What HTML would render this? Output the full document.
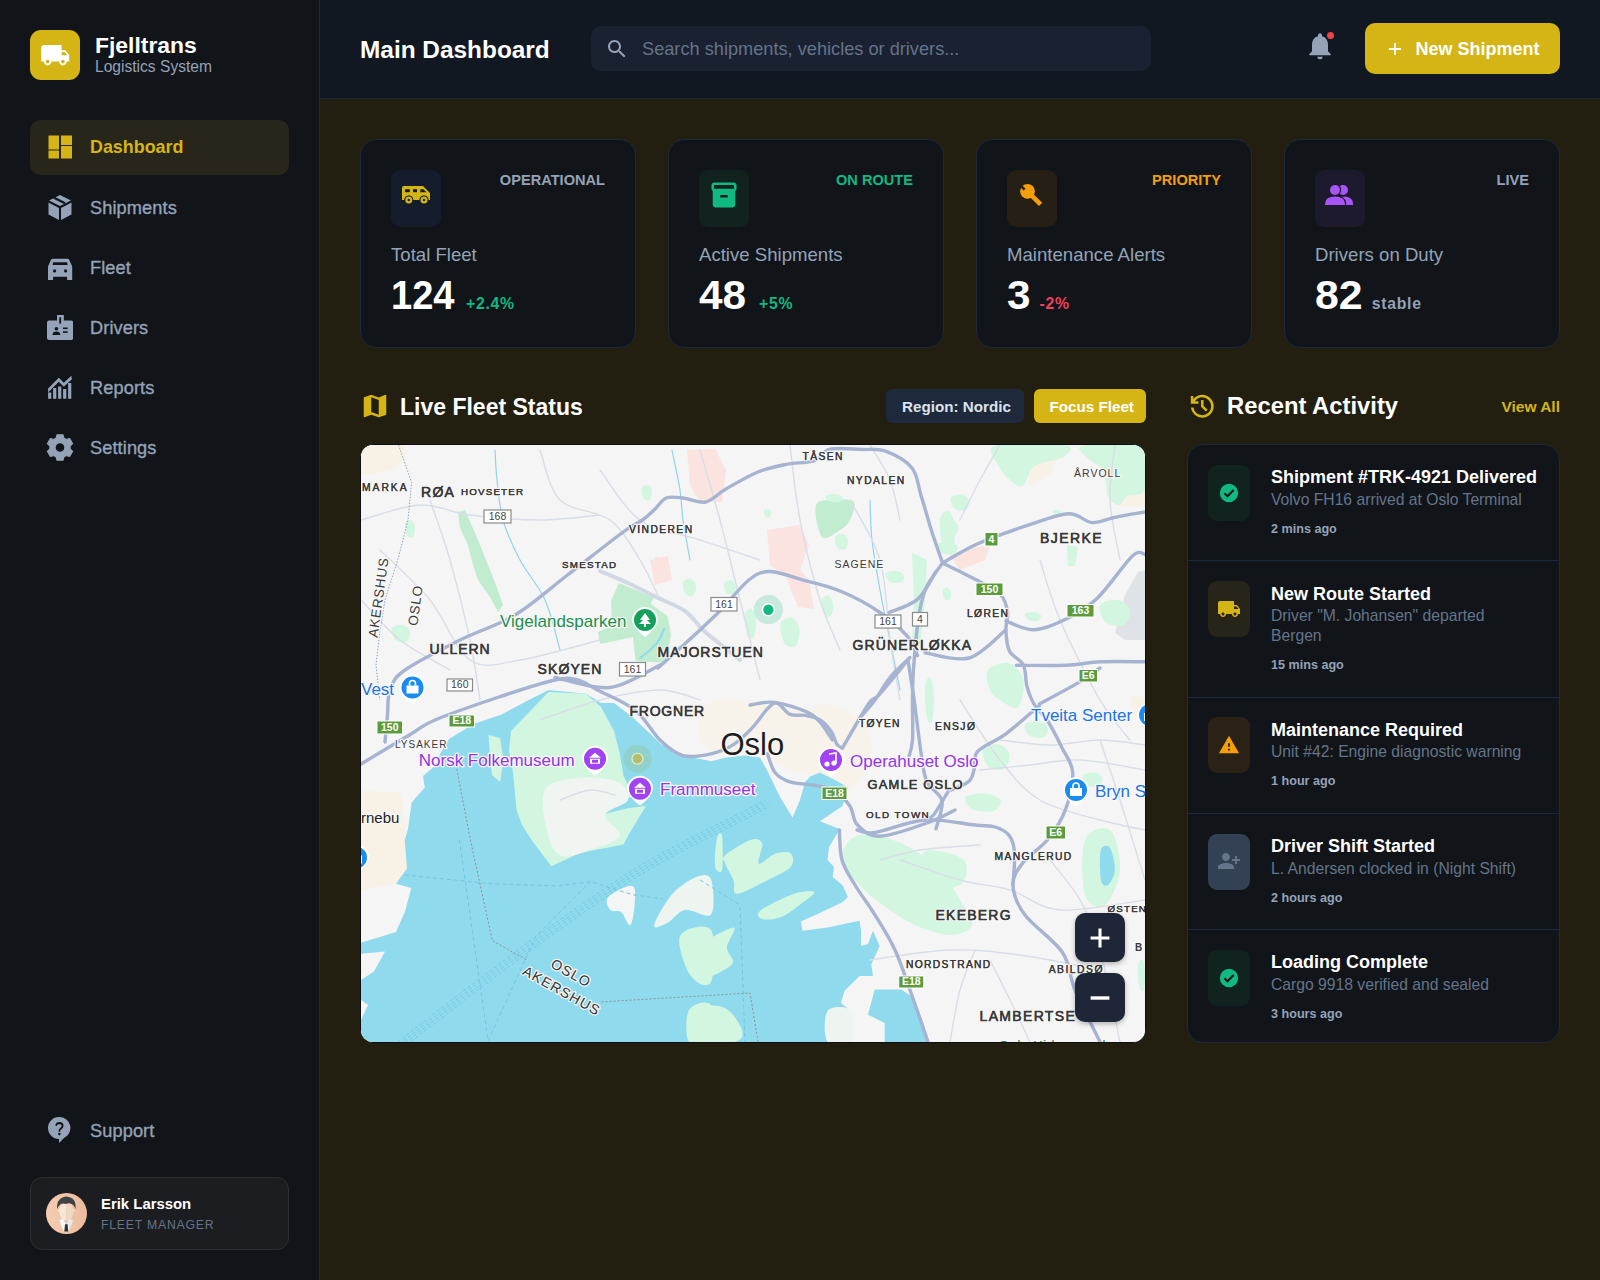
<!DOCTYPE html>
<html><head><meta charset="utf-8"><title>Fjelltrans Dashboard</title>
<style>
html,body{margin:0;padding:0;width:1600px;height:1280px;overflow:hidden;background:#221f12}
body{position:relative;font-family:"Liberation Sans",sans-serif}
.t{position:absolute;line-height:1;white-space:nowrap}
.r{position:absolute;display:block}
</style></head><body>
<div class="r" style="left:0px;top:0px;width:1600px;height:1280px;background:#221f11;border-radius:0px;"></div>
<div class="r" style="left:0px;top:0px;width:320px;height:1280px;background:#111418;border-radius:0px;"></div>
<div class="r" style="left:319px;top:0px;width:1px;height:1280px;background:#1e293b;border-radius:0px;"></div>
<div class="r" style="left:320px;top:0px;width:1280px;height:98px;background:#111822;border-radius:0px;"></div>
<div class="r" style="left:320px;top:98px;width:1280px;height:1px;background:#1e293b;border-radius:0px;"></div>
<div class="r" style="left:30px;top:30px;width:50px;height:50px;background:#d5b515;border-radius:11px;"></div>
<svg class="r" style="left:39.7px;top:39.5px;" width="30.5" height="30.5" viewBox="0 0 24 24"><path fill="#fff" d="M20 8h-3V4H3c-1.1 0-2 .9-2 2v11h2c0 1.66 1.34 3 3 3s3-1.34 3-3h6c0 1.66 1.34 3 3 3s3-1.34 3-3h2v-5l-3-4zM6 18.5c-.83 0-1.5-.67-1.5-1.5s.67-1.5 1.5-1.5 1.5.67 1.5 1.5-.67 1.5-1.5 1.5zm13.5-9l1.96 2.5H17V9.5h2.5zm-1.5 9c-.83 0-1.5-.67-1.5-1.5s.67-1.5 1.5-1.5 1.5.67 1.5 1.5-.67 1.5-1.5 1.5z"/></svg>
<div class="t" style="left:95px;top:33.62px;font-size:22.9px;color:#fff;font-weight:700;letter-spacing:0px;">Fjelltrans</div>
<div class="t" style="left:95px;top:58.79px;font-size:15.6px;color:#94a3b8;font-weight:400;letter-spacing:0px;">Logistics System</div>
<div class="r" style="left:30px;top:120px;width:259px;height:55px;background:#28251a;border-radius:10px;"></div>
<div class="t" style="left:90px;top:139.45px;font-size:17.9px;color:#d5b515;font-weight:700;letter-spacing:0px;">Dashboard</div>
<div class="t" style="left:90px;top:199.19px;font-size:18.2px;color:#94a3b8;font-weight:400;letter-spacing:0.1px;-webkit-text-stroke:0.35px #94a3b8;">Shipments</div>
<div class="t" style="left:90px;top:259.19px;font-size:18.2px;color:#94a3b8;font-weight:400;letter-spacing:0.1px;-webkit-text-stroke:0.35px #94a3b8;">Fleet</div>
<div class="t" style="left:90px;top:319.19px;font-size:18.2px;color:#94a3b8;font-weight:400;letter-spacing:0.1px;-webkit-text-stroke:0.35px #94a3b8;">Drivers</div>
<div class="t" style="left:90px;top:379.19px;font-size:18.2px;color:#94a3b8;font-weight:400;letter-spacing:0.1px;-webkit-text-stroke:0.35px #94a3b8;">Reports</div>
<div class="t" style="left:90px;top:439.19px;font-size:18.2px;color:#94a3b8;font-weight:400;letter-spacing:0.1px;-webkit-text-stroke:0.35px #94a3b8;">Settings</div>
<svg class="r" style="left:48px;top:135px" width="24" height="24" viewBox="0 0 24 24"><g fill="#d5b515"><rect x="0.5" y="0.5" width="10.5" height="14"/><rect x="0.5" y="15.5" width="10.5" height="8"/><rect x="13" y="0.5" width="11" height="9.5"/><rect x="13" y="11" width="11" height="12.5"/></g></svg>
<svg class="r" style="left:46px;top:193px;" width="28" height="28" viewBox="0 0 28 28"><g fill="#94a3b8"><path d="M14 2 L25 7.5 L14 13 L3 7.5 Z"/><path d="M2.5 9.5 L13 15 V27 L2.5 21.5 Z"/><path d="M25.5 9.5 L15 15 V27 L25.5 21.5 Z"/></g><path d="M8 4.8 L19 10.2" stroke="#111418" stroke-width="2.2"/></svg>
<svg class="r" style="left:48px;top:257.5px;" width="25" height="23" viewBox="0 0 25 23"><path fill="#94a3b8" d="M4.6 0.8 H19.6 Q20.8 0.8 21.3 2 L24.2 8.6 V21.9 H19.1 V18.75 H5.1 V21.9 H0 V8.6 L2.9 2 Q3.4 0.8 4.6 0.8 Z"/><path d="M5.1 4.3 H19.1 L19.6 7 H4.6 Z" fill="#111418"/><circle cx="6.6" cy="12.9" r="1.6" fill="#111418"/><circle cx="17.6" cy="12.9" r="1.6" fill="#111418"/></svg>
<svg class="r" style="left:46.9px;top:315px;" width="26.2" height="25" viewBox="46.9 315 26.2 25"><path fill="#94a3b8" d="M56.9 315 H63.75 V320.6 H71 Q73.1 320.6 73.1 322.7 V338 Q73.1 340 71 340 H49 Q46.9 340 46.9 338 V322.7 Q46.9 320.6 49 320.6 H56.9 Z"/><rect x="59.2" y="317.3" width="1.8" height="6.3" fill="#111418"/><circle cx="56.3" cy="328.8" r="1.8" fill="#111418"/><path d="M52.4 335 Q52.6 331.6 56.3 331.6 Q60 331.6 60.2 335 Z" fill="#111418"/><rect x="62.9" y="327.5" width="4.7" height="1.6" fill="#111418"/><rect x="62.9" y="331.3" width="4.7" height="1.6" fill="#111418"/></svg>
<svg class="r" style="left:47px;top:375px;" width="26" height="25" viewBox="47 375 26 25"><g fill="#94a3b8"><path d="M48.1 388.5 L58.8 377.7 L63.8 382.7 L71.3 375.8 L71.9 379.3 L63.8 386.8 L58.8 381.8 L48.1 392.5 Z"/><rect x="48.1" y="392.5" width="3.2" height="6.3" /><rect x="53.1" y="388" width="3.2" height="10.8"/><rect x="58.1" y="386.5" width="3.2" height="12.3"/><rect x="63.1" y="389" width="3.2" height="9.8"/><rect x="68.1" y="383" width="3.2" height="15.8"/></g></svg>
<svg class="r" style="left:44px;top:431px;" width="32" height="33" viewBox="44 431 32 33"><path fill="#94a3b8" stroke="#94a3b8" stroke-width="1.2" stroke-linejoin="round" d="M56.18 438.04 L57.05 434.74 L62.95 434.74 L63.82 438.04 L66.28 439.46 L69.58 438.57 L72.53 443.67 L70.10 446.08 L70.10 448.92 L72.53 451.33 L69.58 456.43 L66.28 455.54 L63.82 456.96 L62.95 460.26 L57.05 460.26 L56.18 456.96 L53.72 455.54 L50.42 456.43 L47.47 451.33 L49.90 448.92 L49.90 446.08 L47.47 443.67 L50.42 438.57 L53.72 439.46 Z"/><circle cx="60" cy="447.5" r="4.3" fill="#111418"/></svg>
<svg class="r" style="left:47px;top:1116px;" width="24" height="28" viewBox="0 0 24 28"><path fill="#94a3b8" d="M12 1 A11 11 0 1 0 12 23 L12 27 L17 22 A11 11 0 0 0 12 1 Z"/><path d="M9.3 9.2 Q9.7 7 12.4 7 Q15.6 7.1 15.6 9.7 Q15.6 11.3 13.9 12.4 Q12.4 13.3 12.4 14.9" stroke="#111418" stroke-width="1.8" fill="none" stroke-linecap="round"/><circle cx="12.4" cy="18.1" r="1.25" fill="#111418"/></svg>
<div class="t" style="left:90px;top:1122.19px;font-size:18.2px;color:#94a3b8;font-weight:400;letter-spacing:0.1px;-webkit-text-stroke:0.35px #94a3b8;">Support</div>
<div class="r" style="left:30px;top:1177px;width:259px;height:73px;background:#1c1d21;border-radius:12px;border:1px solid #2c2e33;box-sizing:border-box;"></div>
<svg class="r" style="left:46px;top:1193px;" width="41" height="41" viewBox="0 0 41 41"><defs><linearGradient id="avg" x1="0" x2="1"><stop offset="0" stop-color="#f4cdb2"/><stop offset="1" stop-color="#ebbc9c"/></linearGradient></defs><circle cx="20.5" cy="20.5" r="20.5" fill="url(#avg)"/><path d="M16.5 24 H23.5 V31 H16.5 Z" fill="#e9c2a5"/><path d="M13.2 27.2 L17.2 25.6 L20.2 31.5 L17.6 38.5 Z" fill="#f4f6f8"/><path d="M27 27.2 L23 25.6 L20.2 31.5 L22.8 38.5 Z" fill="#e6eaee"/><path d="M19 31.2 H21.6 L22.2 38.6 H18.4 Z" fill="#2f3337"/><circle cx="13.4" cy="17.2" r="1.7" fill="#f3e1d0"/><circle cx="27.4" cy="17.2" r="1.7" fill="#ead2bb"/><path d="M20.3 10.5 Q13.3 10.6 13.3 18.5 Q13.6 27 20.3 27.2 Z" fill="#f6e6d7"/><path d="M20.3 10.5 Q27.2 10.6 27.2 18.5 Q27 27 20.3 27.2 Z" fill="#eed8c2"/><path d="M11.2 16.3 Q9.8 5 20.4 3.5 Q31 4.5 29.4 16.3 Q28.2 11.5 24.5 10.6 Q22 10 20 10.9 Q16.5 9.9 14.2 11.4 Q12.2 13 11.2 16.3 Z" fill="#3f4245"/></svg>
<div class="t" style="left:101px;top:1197.39px;font-size:14.9px;color:#fff;font-weight:700;letter-spacing:0px;">Erik Larsson</div>
<div class="t" style="left:101px;top:1218.59px;font-size:12.3px;color:#64748b;font-weight:400;letter-spacing:0.75px;">FLEET MANAGER</div>
<div class="t" style="left:360px;top:37.75px;font-size:24.4px;color:#fff;font-weight:700;letter-spacing:0px;">Main Dashboard</div>
<div class="r" style="left:591px;top:26px;width:560px;height:45px;background:#1a2130;border-radius:10px;"></div>
<svg class="r" style="left:605px;top:37px;" width="24" height="24" viewBox="0 0 24 24"><path fill="#94a3b8" d="M15.5 14h-.79l-.28-.27C15.41 12.59 16 11.11 16 9.5 16 5.91 13.09 3 9.5 3S3 5.91 3 9.5 5.91 16 9.5 16c1.61 0 3.09-.59 4.23-1.57l.27.28v.79l5 4.99L20.49 19l-4.99-5zm-6 0C7.01 14 5 11.99 5 9.5S7.01 5 9.5 5 14 7.01 14 9.5 11.99 14 9.5 14z"/></svg>
<div class="t" style="left:642px;top:40.39px;font-size:18.2px;color:#64748b;font-weight:400;letter-spacing:0px;">Search shipments, vehicles or drivers...</div>
<svg class="r" style="left:1304px;top:30px;" width="32" height="32" viewBox="0 0 24 24"><path fill="#94a3b8" d="M12 22c1.1 0 2-.9 2-2h-4c0 1.1.89 2 2 2zm6-6v-5c0-3.07-1.64-5.64-4.5-6.32V4c0-.83-.67-1.5-1.5-1.5s-1.5.67-1.5 1.5v.68C7.63 5.36 6 7.92 6 11v5l-2 2v1h16v-1l-2-2z"/></svg>
<div class="r" style="left:1326.5px;top:31.5px;width:7px;height:7px;border-radius:50%;background:#ef4444;box-shadow:0 0 0 1.5px #111822"></div>
<div class="r" style="left:1365px;top:23px;width:195px;height:51px;background:#d5b515;border-radius:10px;"></div>
<svg class="r" style="left:1388px;top:42px;" width="14" height="14" viewBox="0 0 14 14"><path d="M7 1 V13 M1 7 H13" stroke="#fff" stroke-width="1.8"/></svg>
<div class="t" style="left:1415.5px;top:40.06px;font-size:18px;color:#fff;font-weight:700;letter-spacing:0px;">New Shipment</div>
<div class="r" style="left:360px;top:139px;width:276px;height:209px;background:#111418;border:1px solid #1e293b;border-radius:16px;box-sizing:border-box"></div>
<div class="r" style="left:391px;top:170px;width:50px;height:57px;background:#151c2b;border-radius:9px;"></div>
<svg class="r" style="left:0;top:0" width="1600" height="300" viewBox="0 0 1600 300"><path fill="#d5b515" d="M404 186 H423 L430 193 V200 H428.2 A4.2 4.2 0 0 0 419.8 200 H413 A4.2 4.2 0 0 0 404.6 200 H402 V188 Q402 186 404 186 Z"/><circle cx="408.8" cy="200" r="4.6" fill="#151c2b"/><circle cx="424" cy="200" r="4.6" fill="#151c2b"/><circle cx="408.8" cy="200" r="3.5" fill="#d5b515"/><circle cx="424" cy="200" r="3.5" fill="#d5b515"/><circle cx="408.8" cy="200" r="1.2" fill="#151c2b"/><circle cx="424" cy="200" r="1.2" fill="#151c2b"/><rect x="405" y="189.2" width="4.8" height="3" fill="#151c2b"/><rect x="413" y="189.2" width="4" height="3" fill="#151c2b"/><path d="M420.3 189.2 H423.4 L426.4 192.2 H420.3 Z" fill="#151c2b"/></svg>
<div class="t" style="right:995px;text-align:right;top:172.64px;font-size:14.6px;color:#94a3b8;font-weight:700;letter-spacing:0px;">OPERATIONAL</div>
<div class="t" style="left:391px;top:246.26px;font-size:18.6px;color:#94a3b8;font-weight:400;letter-spacing:0px;">Total Fleet</div>
<div class="t" style="left:391px;top:274.72px;font-size:40.5px;color:#fff;font-weight:700;letter-spacing:0px;transform:scaleX(0.94);transform-origin:0 0;">124</div>
<div class="t" style="left:466px;top:295.63px;font-size:15.8px;color:#10b981;font-weight:700;letter-spacing:0.7px;">+2.4%</div>
<div class="r" style="left:668px;top:139px;width:276px;height:209px;background:#111418;border:1px solid #1e293b;border-radius:16px;box-sizing:border-box"></div>
<div class="r" style="left:699px;top:170px;width:50px;height:57px;background:#12231f;border-radius:9px;"></div>
<svg class="r" style="left:709px;top:180px;" width="30" height="30" viewBox="0 0 24 24"><path fill="#10b981" d="M20 2H4c-1 0-2 .9-2 2v3.01c0 .72.43 1.34 1 1.69V20c0 1.1 1.1 2 2 2h14c.9 0 2-.9 2-2V8.7c.57-.35 1-.97 1-1.69V4c0-1.1-1-2-2-2zm-5 12H9v-2h6v2zm5-7H4V4l16-.02V7z"/></svg>
<div class="t" style="right:687px;text-align:right;top:172.64px;font-size:14.6px;color:#10b981;font-weight:700;letter-spacing:0px;">ON ROUTE</div>
<div class="t" style="left:699px;top:246.26px;font-size:18.6px;color:#94a3b8;font-weight:400;letter-spacing:0px;">Active Shipments</div>
<div class="t" style="left:699px;top:274.72px;font-size:40.5px;color:#fff;font-weight:700;letter-spacing:0px;transform:scaleX(1.044);transform-origin:0 0;">48</div>
<div class="t" style="left:759px;top:295.63px;font-size:15.8px;color:#10b981;font-weight:700;letter-spacing:0.7px;">+5%</div>
<div class="r" style="left:976px;top:139px;width:276px;height:209px;background:#111418;border:1px solid #1e293b;border-radius:16px;box-sizing:border-box"></div>
<div class="r" style="left:1007px;top:170px;width:50px;height:57px;background:#261f15;border-radius:9px;"></div>
<svg class="r" style="left:0;top:0" width="1600" height="300" viewBox="0 0 1600 300"><path d="M1030.5 194.3 L1040.6 204.4" stroke="#f59e0b" stroke-width="4.6"/><circle cx="1027.5" cy="191.3" r="7.4" fill="#f59e0b"/><path d="M1020.5 185.5 L1024.6 189.6" stroke="#261f15" stroke-width="2.6"/></svg>
<div class="t" style="right:379px;text-align:right;top:172.64px;font-size:14.6px;color:#f59e0b;font-weight:700;letter-spacing:0px;">PRIORITY</div>
<div class="t" style="left:1007px;top:246.26px;font-size:18.6px;color:#94a3b8;font-weight:400;letter-spacing:0px;">Maintenance Alerts</div>
<div class="t" style="left:1007px;top:274.72px;font-size:40.5px;color:#fff;font-weight:700;letter-spacing:0px;transform:scaleX(1.045);transform-origin:0 0;">3</div>
<div class="t" style="left:1039.6px;top:295.63px;font-size:15.8px;color:#f43f5e;font-weight:700;letter-spacing:0.7px;">-2%</div>
<div class="r" style="left:1284px;top:139px;width:276px;height:209px;background:#111418;border:1px solid #1e293b;border-radius:16px;box-sizing:border-box"></div>
<div class="r" style="left:1315px;top:170px;width:50px;height:57px;background:#1e1a2e;border-radius:9px;"></div>
<svg class="r" style="left:0;top:0" width="1600" height="300" viewBox="0 0 1600 300"><circle cx="1343" cy="190" r="5" fill="#a855f7"/><path d="M1339 205 V199.5 Q1341 196.5 1345 196.5 Q1353 197 1353 204 V205 Z" fill="#a855f7"/><circle cx="1335" cy="190" r="6.2" fill="#1e1a2e"/><circle cx="1335" cy="190" r="5" fill="#a855f7"/><path d="M1323.8 206 V203 Q1324.5 195.4 1335 195.4 Q1345.5 195.4 1346.2 203 V206 Z" fill="#1e1a2e"/><path d="M1325 205 V203.5 Q1325.5 196.6 1335 196.6 Q1344.5 196.6 1345 203.5 V205 Z" fill="#a855f7"/></svg>
<div class="t" style="right:71px;text-align:right;top:172.64px;font-size:14.6px;color:#94a3b8;font-weight:700;letter-spacing:0px;">LIVE</div>
<div class="t" style="left:1315px;top:246.26px;font-size:18.6px;color:#94a3b8;font-weight:400;letter-spacing:0px;">Drivers on Duty</div>
<div class="t" style="left:1315px;top:274.72px;font-size:40.5px;color:#fff;font-weight:700;letter-spacing:0px;transform:scaleX(1.057);transform-origin:0 0;">82</div>
<div class="t" style="left:1371.8px;top:295.63px;font-size:15.8px;color:#94a3b8;font-weight:700;letter-spacing:0.7px;">stable</div>
<svg class="r" style="left:360px;top:391px;" width="30" height="30" viewBox="0 0 24 24"><path fill="#d5b515" d="M20.5 3l-.16.03L15 5.1 9 3 3.36 4.9c-.21.07-.36.25-.36.48V20.5c0 .28.22.5.5.5l.16-.03L9 18.9l6 2.1 5.64-1.9c.21-.07.36-.25.36-.48V3.5c0-.28-.22-.5-.5-.5zM15 19l-6-2.11V5l6 2.11V19z"/></svg>
<div class="t" style="left:400px;top:395.53px;font-size:23.0px;color:#fff;font-weight:700;letter-spacing:0px;">Live Fleet Status</div>
<div class="r" style="left:886px;top:389px;width:138px;height:34px;background:#1e293b;border-radius:6px;"></div>
<div class="t" style="left:902px;top:398.63px;font-size:15.2px;color:#dbe3ee;font-weight:700;letter-spacing:0px;">Region: Nordic</div>
<div class="r" style="left:1034px;top:389px;width:112px;height:34px;background:#d5b515;border-radius:6px;"></div>
<div class="t" style="left:1049.5px;top:398.63px;font-size:15.2px;color:#fff;font-weight:700;letter-spacing:0px;">Focus Fleet</div>
<svg class="r" style="left:1186.5px;top:390.8px;" width="30.5" height="30.5" viewBox="0 -960 960 960"><path fill="#d5b515" d="M480-120q-138 0-240.5-91.5T122-440h82q14 104 92.5 172T480-200q117 0 198.5-81.5T760-480q0-117-81.5-198.5T480-760q-69 0-129 32t-101 88h110v80H120v-240h80v94q51-64 124.5-99T480-840q75 0 140.5 28.5t114 77q48.5 48.5 77 114T840-480q0 75-28.5 140.5t-77 114q-48.5 48.5-114 77T480-120Zm112-192L440-464v-216h80v184l128 128-56 56Z"/></svg>
<div class="t" style="left:1227px;top:394.25px;font-size:23.8px;color:#fff;font-weight:700;letter-spacing:0px;">Recent Activity</div>
<div class="t" style="right:40px;text-align:right;top:398.68px;font-size:15.5px;color:#d5b515;font-weight:700;letter-spacing:0px;">View All</div>
<div class="r" style="left:1187px;top:444px;width:373px;height:599px;background:#111418;border:1px solid #1e293b;border-radius:16px;box-sizing:border-box"></div>
<div class="r" style="left:1188px;top:560px;width:371px;height:1px;background:#1e293b;border-radius:0px;"></div>
<div class="r" style="left:1188px;top:697px;width:371px;height:1px;background:#1e293b;border-radius:0px;"></div>
<div class="r" style="left:1188px;top:813px;width:371px;height:1px;background:#1e293b;border-radius:0px;"></div>
<div class="r" style="left:1188px;top:929px;width:371px;height:1px;background:#1e293b;border-radius:0px;"></div>
<div class="r" style="left:1208px;top:465px;width:42px;height:56px;background:#11231f;border-radius:9px;"></div>
<svg class="r" style="left:1218px;top:482px;" width="22" height="22" viewBox="0 0 24 24"><circle cx="12" cy="12" r="10" fill="#10b981"/><path d="M7 12.3 L10.3 15.5 L17 8.8" stroke="#111418" stroke-width="2.3" fill="none"/></svg>
<div class="t" style="left:1271px;top:468.36px;font-size:18px;color:#fff;font-weight:700;letter-spacing:0px;">Shipment #TRK-4921 Delivered</div>
<div class="t" style="left:1271px;top:491.81px;font-size:15.7px;color:#64748b;font-weight:400;letter-spacing:0px;">Volvo FH16 arrived at Oslo Terminal</div>
<div class="t" style="left:1271px;top:522.73px;font-size:12.6px;color:#94a3b8;font-weight:700;letter-spacing:0px;">2 mins ago</div>
<div class="r" style="left:1208px;top:581px;width:42px;height:56px;background:#27241a;border-radius:9px;"></div>
<svg class="r" style="left:1217px;top:596.5px;" width="24" height="24" viewBox="0 0 24 24"><path fill="#d5b515" d="M20 8h-3V4H3c-1.1 0-2 .9-2 2v11h2c0 1.66 1.34 3 3 3s3-1.34 3-3h6c0 1.66 1.34 3 3 3s3-1.34 3-3h2v-5l-3-4zM6 18.5c-.83 0-1.5-.67-1.5-1.5s.67-1.5 1.5-1.5 1.5.67 1.5 1.5-.67 1.5-1.5 1.5zm13.5-9l1.96 2.5H17V9.5h2.5zm-1.5 9c-.83 0-1.5-.67-1.5-1.5s.67-1.5 1.5-1.5 1.5.67 1.5 1.5-.67 1.5-1.5 1.5z"/></svg>
<div class="t" style="left:1271px;top:584.76px;font-size:18px;color:#fff;font-weight:700;letter-spacing:0px;">New Route Started</div>
<div class="t" style="left:1271px;top:608.21px;font-size:15.7px;color:#64748b;font-weight:400;letter-spacing:0px;">Driver "M. Johansen" departed</div>
<div class="t" style="left:1271px;top:628.21px;font-size:15.7px;color:#64748b;font-weight:400;letter-spacing:0px;">Bergen</div>
<div class="t" style="left:1271px;top:659.13px;font-size:12.6px;color:#94a3b8;font-weight:700;letter-spacing:0px;">15 mins ago</div>
<div class="r" style="left:1208px;top:717px;width:42px;height:56px;background:#2a2217;border-radius:9px;"></div>
<svg class="r" style="left:1218px;top:733.5px;" width="22" height="22" viewBox="0 0 24 24"><path fill="#f59e0b" d="M1 21h22L12 2 1 21zm12-3h-2v-2h2v2zm0-4h-2v-4h2v4z"/></svg>
<div class="t" style="left:1271px;top:720.96px;font-size:18px;color:#fff;font-weight:700;letter-spacing:0px;">Maintenance Required</div>
<div class="t" style="left:1271px;top:744.41px;font-size:15.7px;color:#64748b;font-weight:400;letter-spacing:0px;">Unit #42: Engine diagnostic warning</div>
<div class="t" style="left:1271px;top:775.33px;font-size:12.6px;color:#94a3b8;font-weight:700;letter-spacing:0px;">1 hour ago</div>
<div class="r" style="left:1208px;top:834px;width:42px;height:56px;background:#334155;border-radius:9px;"></div>
<svg class="r" style="left:1217px;top:849px;" width="24" height="24" viewBox="0 0 24 24"><path fill="#64748b" d="M9 12c2.21 0 4-1.79 4-4s-1.79-4-4-4-4 1.79-4 4 1.79 4 4 4zm9-2V7h2v3h3v2h-3v3h-2v-3h-3v-2h3zm-9 4c-2.67 0-8 1.34-8 4v2h16v-2c0-2.66-5.33-4-8-4z"/></svg>
<div class="t" style="left:1271px;top:837.26px;font-size:18px;color:#fff;font-weight:700;letter-spacing:0px;">Driver Shift Started</div>
<div class="t" style="left:1271px;top:860.71px;font-size:15.7px;color:#64748b;font-weight:400;letter-spacing:0px;">L. Andersen clocked in (Night Shift)</div>
<div class="t" style="left:1271px;top:891.63px;font-size:12.6px;color:#94a3b8;font-weight:700;letter-spacing:0px;">2 hours ago</div>
<div class="r" style="left:1208px;top:950px;width:42px;height:56px;background:#11231f;border-radius:9px;"></div>
<svg class="r" style="left:1218px;top:967px;" width="22" height="22" viewBox="0 0 24 24"><circle cx="12" cy="12" r="10" fill="#10b981"/><path d="M7 12.3 L10.3 15.5 L17 8.8" stroke="#111418" stroke-width="2.3" fill="none"/></svg>
<div class="t" style="left:1271px;top:953.46px;font-size:18px;color:#fff;font-weight:700;letter-spacing:0px;">Loading Complete</div>
<div class="t" style="left:1271px;top:976.91px;font-size:15.7px;color:#64748b;font-weight:400;letter-spacing:0px;">Cargo 9918 verified and sealed</div>
<div class="t" style="left:1271px;top:1007.83px;font-size:12.6px;color:#94a3b8;font-weight:700;letter-spacing:0px;">3 hours ago</div>
<div class="r" style="left:360px;top:444px;width:784px;height:597px;border:1px solid #0b0e13;border-radius:13px;overflow:hidden;background:#f3f4f6">
<svg width="784" height="597" viewBox="361 445 784 597" style="display:block">
<rect x="361" y="445" width="784" height="597" fill="#f5f5f5"/>
<path d="M361.0 445.0 C367.5 440.5 392.8 442.8 400.0 445.0 C407.2 447.2 405.7 453.8 404.0 458.0 C402.3 462.2 397.2 467.7 390.0 470.0 C382.8 472.3 365.8 476.2 361.0 472.0 C356.2 467.8 354.5 449.5 361.0 445.0 Z" fill="#f7f1e6" />
<path d="M361.0 791.0 L400.0 792.0 L406.0 830.0 L404.7 840.0 L407.0 868.0 L396.0 884.0 L361.0 890.0 Z" fill="#f7f1e6" />
<path d="M705.0 705.0 C712.5 698.3 730.8 699.2 745.0 700.0 C759.2 700.8 775.8 709.2 790.0 710.0 C804.2 710.8 817.5 702.5 830.0 705.0 C842.5 707.5 858.3 715.8 865.0 725.0 C871.7 734.2 872.8 749.2 870.0 760.0 C867.2 770.8 857.2 787.5 848.0 790.0 C838.8 792.5 824.7 778.3 815.0 775.0 C805.3 771.7 799.2 773.0 790.0 770.0 C780.8 767.0 770.8 759.5 760.0 757.0 C749.2 754.5 735.0 757.8 725.0 755.0 C715.0 752.2 703.3 748.3 700.0 740.0 C696.7 731.7 697.5 711.7 705.0 705.0 Z" fill="#f7f3ea" />
<path d="M1130.0 700.0 C1130.0 695.0 1142.5 695.0 1145.0 700.0 C1147.5 705.0 1147.5 730.0 1145.0 730.0 C1142.5 730.0 1130.0 705.0 1130.0 700.0 Z" fill="#f7f1e6" />
<path d="M687.0 450.0 L715.0 449.0 L726.0 470.0 L722.0 502.0 L700.0 502.0 L690.0 485.0 Z" fill="#fbe3e0" />
<path d="M767.0 530.0 L800.0 525.0 L809.0 545.0 L800.0 570.0 L809.0 580.0 L814.0 609.0 L798.0 607.0 L785.0 575.0 L770.0 565.0 Z" fill="#fbe3e0" />
<path d="M655.0 556.0 L666.0 560.0 L666.0 582.0 L655.0 582.0 Z" fill="#fbe3e0" />
<path d="M650.0 560.0 L668.0 556.0 L672.0 580.0 L655.0 585.0 Z" fill="#fbe3e0" />
<path d="M949.6 555.0 L970.0 548.0 L990.0 545.5 L985.0 560.0 L960.0 570.0 Z" fill="#fbe3e0" />
<path d="M1023.0 460.0 L1058.0 456.0 L1050.0 475.0 L1030.0 486.0 Z" fill="#f7f1e6" />
<path d="M1106.0 484.0 L1125.0 490.0 L1144.7 484.0 L1144.7 507.0 L1115.0 505.0 Z" fill="#f7f1e6" />
<path d="M1115.0 633.0 L1125.0 595.0 L1138.0 572.0 L1145.0 570.0 L1145.0 640.0 L1125.0 640.0 Z" fill="#dfe2e7" />
<path d="M995.3 445.3 C1006.4 441.8 1054.5 443.2 1065.6 445.3 C1076.7 447.4 1067.4 454.1 1062.1 457.6 C1056.8 461.1 1040.5 461.7 1034.0 466.4 C1027.5 471.1 1026.9 483.1 1023.4 485.7 C1019.9 488.3 1017.0 485.4 1012.9 482.2 C1008.8 479.0 1001.7 472.5 998.8 466.4 C995.9 460.2 984.2 448.8 995.3 445.3 Z" fill="#d2f6e0" />
<path d="M1083.2 445.3 C1092.9 443.2 1134.5 438.0 1144.7 445.3 C1155.0 452.6 1147.6 480.7 1144.7 489.2 C1141.8 497.7 1131.6 493.6 1127.2 496.2 C1122.8 498.8 1121.6 505.0 1118.4 505.0 C1115.2 505.0 1109.9 500.0 1107.8 496.2 C1105.7 492.4 1107.2 486.9 1106.0 482.2 C1104.8 477.5 1104.0 472.2 1100.8 468.1 C1097.6 464.0 1089.6 461.4 1086.7 457.6 C1083.8 453.8 1073.5 447.4 1083.2 445.3 Z" fill="#d2f6e0" />
<path d="M611.0 601.0 L619.0 583.0 L654.0 597.5 L650.6 604.0 L667.5 616.0 L671.0 635.0 L665.6 663.0 L635.6 661.0 L633.0 637.0 L600.0 644.0 L598.0 632.0 L612.0 625.6 Z" fill="#c2eccf" />
<path d="M458.0 512.0 L465.0 510.0 L478.0 540.0 L488.0 565.0 L496.0 585.0 L503.0 605.0 L498.0 612.0 L490.0 597.0 L478.0 580.0 L473.0 565.0 L468.0 545.0 L460.0 528.0 Z" fill="#c2eccf" />
<path d="M816.0 505.0 C818.2 498.8 828.7 500.5 835.0 500.0 C841.3 499.5 851.5 498.7 854.0 502.0 C856.5 505.3 852.3 515.3 850.0 520.0 C847.7 524.7 844.7 527.2 840.0 530.0 C835.3 532.8 826.0 541.2 822.0 537.0 C818.0 532.8 813.8 511.2 816.0 505.0 Z" fill="#c2eccf" />
<path d="M835.0 537.0 C835.9 534.8 840.6 533.5 842.8 534.0 C845.0 534.5 847.6 537.5 848.0 540.0 C848.4 542.5 847.1 547.8 845.4 549.0 C843.7 550.2 839.3 549.5 837.6 547.5 C835.9 545.5 834.1 539.2 835.0 537.0 Z" fill="#d2f6e0" />
<path d="M885.6 573.3 C886.9 571.6 893.7 570.6 896.9 571.0 C900.0 571.4 903.8 573.7 904.4 575.6 C905.0 577.5 903.1 581.5 900.6 582.5 C898.1 583.5 891.9 582.9 889.4 581.4 C886.9 579.8 884.3 575.0 885.6 573.3 Z" fill="#d2f6e0" />
<path d="M822.0 599.7 C822.7 596.6 826.8 594.9 828.6 595.6 C830.4 596.3 832.6 600.4 833.0 603.8 C833.4 607.2 832.3 614.3 830.8 616.0 C829.3 617.7 825.7 616.7 824.2 614.0 C822.7 611.2 821.3 602.7 822.0 599.7 Z" fill="#d2f6e0" />
<path d="M780.6 623.6 C781.9 619.4 788.7 617.1 791.9 618.0 C795.0 618.9 798.8 624.5 799.4 629.2 C800.0 633.9 798.1 643.7 795.6 646.0 C793.1 648.3 786.9 646.9 784.4 643.2 C781.9 639.5 779.3 627.8 780.6 623.6 Z" fill="#d2f6e0" />
<path d="M745.0 614.6 C745.7 610.4 749.8 608.1 751.6 609.0 C753.4 609.9 755.6 615.5 756.0 620.2 C756.4 624.9 755.3 634.7 753.8 637.0 C752.3 639.3 748.7 637.9 747.2 634.2 C745.7 630.5 744.3 618.8 745.0 614.6 Z" fill="#d2f6e0" />
<path d="M724.0 583.3 C724.8 581.3 729.0 580.2 731.0 580.6 C732.9 581.0 735.2 583.7 735.6 586.0 C736.0 588.2 734.8 592.9 733.3 594.0 C731.7 595.1 727.9 594.4 726.3 592.7 C724.8 590.9 723.2 585.3 724.0 583.3 Z" fill="#d2f6e0" />
<path d="M683.0 582.3 C683.9 579.8 688.6 578.4 690.8 579.0 C693.0 579.6 695.6 582.9 696.0 585.6 C696.4 588.4 695.1 594.2 693.4 595.6 C691.7 597.0 687.3 596.2 685.6 593.9 C683.9 591.7 682.1 584.8 683.0 582.3 Z" fill="#d2f6e0" />
<path d="M940.0 519.3 C941.0 513.1 946.5 509.6 949.0 511.0 C951.5 512.4 954.5 520.7 955.0 527.6 C955.5 534.5 954.0 549.0 952.0 552.5 C950.0 556.0 945.0 553.9 943.0 548.4 C941.0 542.8 939.0 525.5 940.0 519.3 Z" fill="#d2f6e0" />
<path d="M764.0 510.6 C764.5 509.4 767.0 508.7 768.2 509.0 C769.4 509.3 770.8 510.9 771.0 512.2 C771.2 513.5 770.5 516.3 769.6 517.0 C768.7 517.7 766.3 517.3 765.4 516.2 C764.5 515.1 763.5 511.8 764.0 510.6 Z" fill="#d2f6e0" />
<path d="M825.6 495.6 C826.7 494.4 832.9 493.7 835.7 494.0 C838.6 494.3 841.9 495.9 842.5 497.2 C843.1 498.5 841.4 501.3 839.1 502.0 C836.9 502.7 831.2 502.3 829.0 501.2 C826.7 500.1 824.5 496.8 825.6 495.6 Z" fill="#d2f6e0" />
<path d="M951.0 497.6 C952.2 495.3 958.8 494.0 961.8 494.5 C964.8 495.0 968.4 498.1 969.0 500.7 C969.6 503.3 967.8 508.7 965.4 510.0 C963.0 511.3 957.0 510.5 954.6 508.4 C952.2 506.4 949.8 499.9 951.0 497.6 Z" fill="#d2f6e0" />
<path d="M946.0 523.8 C946.8 521.7 951.2 520.5 953.2 521.0 C955.2 521.5 957.6 524.3 958.0 526.6 C958.4 528.9 957.2 533.8 955.6 535.0 C954.0 536.2 950.0 535.5 948.4 533.6 C946.8 531.7 945.2 525.9 946.0 523.8 Z" fill="#d2f6e0" />
<path d="M937.0 544.4 C938.4 542.6 946.1 541.6 949.6 542.0 C953.1 542.4 957.3 544.8 958.0 546.8 C958.7 548.8 956.6 553.0 953.8 554.0 C951.0 555.0 944.0 554.4 941.2 552.8 C938.4 551.2 935.6 546.2 937.0 544.4 Z" fill="#d2f6e0" />
<path d="M1025.0 613.8 C1026.1 612.4 1031.9 611.7 1034.6 612.0 C1037.3 612.3 1040.5 614.1 1041.0 615.6 C1041.5 617.1 1039.9 620.2 1037.8 621.0 C1035.7 621.8 1030.3 621.3 1028.2 620.1 C1026.1 618.9 1023.9 615.1 1025.0 613.8 Z" fill="#d2f6e0" />
<path d="M942.6 590.2 C943.2 588.3 946.2 587.3 947.6 587.7 C949.0 588.1 950.7 590.6 951.0 592.6 C951.3 594.7 950.4 599.0 949.3 600.0 C948.2 601.0 945.4 600.4 944.3 598.8 C943.2 597.1 942.0 592.0 942.6 590.2 Z" fill="#d2f6e0" />
<path d="M1053.0 511.1 C1053.6 510.3 1056.9 509.8 1058.4 510.0 C1059.9 510.2 1061.7 511.3 1062.0 512.2 C1062.3 513.2 1061.4 515.1 1060.2 515.6 C1059.0 516.1 1056.0 515.8 1054.8 515.0 C1053.6 514.3 1052.4 512.0 1053.0 511.1 Z" fill="#d2f6e0" />
<path d="M392.0 628.4 C393.2 625.9 399.8 624.4 402.8 625.0 C405.8 625.6 409.4 629.0 410.0 631.8 C410.6 634.6 408.8 640.6 406.4 642.0 C404.0 643.4 398.0 642.6 395.6 640.3 C393.2 638.0 390.8 630.9 392.0 628.4 Z" fill="#d2f6e0" />
<path d="M405.0 523.4 C405.7 520.9 409.3 519.4 411.0 520.0 C412.7 520.6 414.7 524.0 415.0 526.8 C415.3 529.6 414.3 535.6 413.0 537.0 C411.7 538.4 408.3 537.6 407.0 535.3 C405.7 533.0 404.3 525.9 405.0 523.4 Z" fill="#d2f6e0" />
<path d="M642.0 488.0 C642.7 485.8 646.3 484.5 648.0 485.0 C649.7 485.5 651.7 488.5 652.0 491.0 C652.3 493.5 651.3 498.8 650.0 500.0 C648.7 501.2 645.3 500.5 644.0 498.5 C642.7 496.5 641.3 490.2 642.0 488.0 Z" fill="#d2f6e0" />
<path d="M1100.0 605.0 C1102.0 601.2 1113.0 599.2 1118.0 600.0 C1123.0 600.8 1129.0 605.8 1130.0 610.0 C1131.0 614.2 1128.0 622.9 1124.0 625.0 C1120.0 627.1 1110.0 625.8 1106.0 622.5 C1102.0 619.2 1098.0 608.8 1100.0 605.0 Z" fill="#d2f6e0" />
<path d="M983.0 749.3 C984.8 745.6 994.4 743.6 998.8 744.4 C1003.2 745.2 1008.5 750.1 1009.4 754.2 C1010.3 758.3 1007.6 767.0 1004.1 769.0 C1000.6 771.0 991.8 769.8 988.3 766.5 C984.8 763.3 981.2 753.0 983.0 749.3 Z" fill="#d2f6e0" />
<path d="M965.4 797.1 C967.7 794.5 980.7 793.0 986.5 793.6 C992.4 794.2 999.4 797.7 1000.6 800.6 C1001.8 803.5 998.3 809.5 993.6 811.0 C988.9 812.5 977.1 811.6 972.4 809.3 C967.7 806.9 963.1 799.7 965.4 797.1 Z" fill="#d2f6e0" />
<path d="M1083.0 775.3 C1084.3 773.2 1091.5 772.0 1094.7 772.5 C1098.0 773.0 1101.8 775.8 1102.5 778.1 C1103.2 780.5 1101.2 785.4 1098.6 786.6 C1096.0 787.8 1089.5 787.1 1086.9 785.2 C1084.3 783.3 1081.7 777.4 1083.0 775.3 Z" fill="#d2f6e0" />
<path d="M1025.0 724.7 C1026.5 722.3 1035.0 721.0 1038.8 721.5 C1042.6 722.0 1047.2 725.2 1048.0 727.8 C1048.8 730.5 1046.5 736.0 1043.4 737.3 C1040.3 738.6 1032.7 737.8 1029.6 735.7 C1026.5 733.6 1023.5 727.0 1025.0 724.7 Z" fill="#d2f6e0" />
<path d="M925.0 686.4 C925.6 679.8 928.8 676.1 930.3 677.6 C931.7 679.1 933.5 687.8 933.8 695.2 C934.1 702.5 933.2 717.8 932.0 721.5 C930.9 725.2 927.9 723.0 926.8 717.1 C925.6 711.3 924.4 693.0 925.0 686.4 Z" fill="#d2f6e0" />
<path d="M1138.0 966.0 C1138.5 961.5 1141.0 959.0 1142.2 960.0 C1143.4 961.0 1144.8 967.0 1145.0 972.0 C1145.2 977.0 1144.5 987.5 1143.6 990.0 C1142.7 992.5 1140.3 991.0 1139.4 987.0 C1138.5 983.0 1137.5 970.5 1138.0 966.0 Z" fill="#d2f6e0" />
<path d="M912.0 552.5 L927.0 560.0 L925.0 600.0 L920.0 646.0 L912.0 646.0 L914.0 600.0 Z" fill="#d2f6e0" />
<path d="M988.0 670.0 C991.3 665.6 1004.1 661.8 1010.0 663.5 C1015.9 665.2 1022.1 672.7 1023.4 680.0 C1024.7 687.3 1021.9 704.2 1018.0 707.5 C1014.1 710.8 1004.7 702.9 1000.0 700.0 C995.3 697.1 992.0 695.0 990.0 690.0 C988.0 685.0 984.7 674.4 988.0 670.0 Z" fill="#d2f6e0" />
<path d="M1067.0 545.0 L1078.0 547.0 L1075.0 566.0 L1068.0 566.0 Z" fill="#d2f6e0" />
<path d="M842.0 860.0 C841.2 853.3 845.3 844.2 850.0 840.0 C854.7 835.8 860.8 834.2 870.0 835.0 C879.2 835.8 893.3 839.2 905.0 845.0 C916.7 850.8 930.8 860.8 940.0 870.0 C949.2 879.2 954.7 890.8 960.0 900.0 C965.3 909.2 973.7 919.2 972.0 925.0 C970.3 930.8 959.5 935.0 950.0 935.0 C940.5 935.0 925.0 929.2 915.0 925.0 C905.0 920.8 897.5 915.0 890.0 910.0 C882.5 905.0 875.8 900.0 870.0 895.0 C864.2 890.0 859.7 885.8 855.0 880.0 C850.3 874.2 842.8 866.7 842.0 860.0 Z" fill="#d2f6e0" />
<path d="M925.0 851.6 C931.5 847.4 957.9 854.4 963.7 860.0 C969.5 865.6 966.5 880.8 960.0 885.0 C953.5 889.2 930.8 890.6 925.0 885.0 C919.2 879.4 918.5 855.8 925.0 851.6 Z" fill="#d2f6e0" />
<path d="M1085.0 840.0 C1089.2 829.2 1104.2 825.0 1110.0 830.0 C1115.8 835.0 1120.8 857.5 1120.0 870.0 C1119.2 882.5 1110.8 900.8 1105.0 905.0 C1099.2 909.2 1088.3 905.8 1085.0 895.0 C1081.7 884.2 1080.8 850.8 1085.0 840.0 Z" fill="#d2f6e0" />
<path d="M361.0 942.8 L396.0 932.0 L404.8 912.0 L411.3 888.0 L396.0 883.8 L407.0 868.4 L404.7 840.0 L408.0 829.0 L411.6 802.5 L424.8 787.5 L423.0 776.0 L436.0 765.0 L440.0 754.0 L449.0 739.0 L473.5 724.0 L501.6 714.4 L533.5 697.5 L548.5 690.0 L586.0 693.8 L601.0 703.0 L614.0 703.0 L633.0 717.5 L661.0 744.0 L683.0 755.6 L711.2 761.2 L726.2 757.5 L745.0 755.6 L760.0 757.5 L768.0 772.0 L780.0 797.0 L792.5 817.5 L800.0 800.0 L805.0 782.0 L810.6 776.2 L820.0 772.5 L835.0 780.0 L848.0 787.5 L842.5 806.0 L820.0 821.2 L838.8 828.8 L839.4 830.0 L829.0 847.0 L827.6 860.0 L834.0 867.0 L832.7 877.0 L842.8 885.4 L847.8 897.0 L842.8 902.0 L817.6 914.0 L800.8 921.5 L802.5 930.8 L827.6 927.4 L859.6 920.7 L861.0 930.8 L861.0 946.0 L868.0 944.0 L873.0 930.8 L879.7 946.0 L871.3 964.4 L873.0 976.0 L859.6 976.0 L844.4 991.0 L841.0 1003.0 L851.0 1011.4 L842.8 1014.7 L834.4 1014.7 L827.6 1042.0 L361.0 1042.0 Z" fill="#90daee" />
<path d="M874.7 989.6 L901.5 989.6 L913.3 998.0 L923.4 1023.0 L928.4 1042.0 L884.7 1042.0 L884.7 1023.0 L868.0 1014.7 Z" fill="#90daee" />
<path d="M361.0 953.8 L385.0 951.6 L374.1 971.3 L361.0 980.0 Z" fill="#f5f5f5" />
<path d="M361.0 1000.0 L368.0 1005.0 L361.0 1020.0 Z" fill="#f5f5f5" />
<path d="M548.5 692.0 L511.0 731.0 L509.0 750.0 L513.0 772.5 L516.6 810.0 L522.0 825.0 L531.6 840.0 L551.3 866.2 L579.8 853.0 L601.6 848.8 L623.5 844.4 L629.0 834.0 L646.0 806.0 L629.0 808.0 L604.8 813.8 L633.0 795.0 L623.5 776.0 L619.8 753.8 L614.0 731.0 L601.0 707.0 L586.0 693.8 Z" fill="#d2f6e0" />
<path d="M545.0 790.0 C550.3 780.5 567.8 779.3 580.0 778.0 C592.2 776.7 610.0 778.3 618.0 782.0 C626.0 785.7 630.2 794.5 628.0 800.0 C625.8 805.5 606.3 809.0 605.0 815.0 C603.7 821.0 622.5 830.2 620.0 836.0 C617.5 841.8 599.7 846.7 590.0 850.0 C580.3 853.3 569.0 858.5 562.0 856.0 C555.0 853.5 550.8 846.0 548.0 835.0 C545.2 824.0 539.7 799.5 545.0 790.0 Z" fill="#f1f5f2" />
<path d="M488.5 735.0 L500.0 738.0 L503.5 760.0 L500.0 782.0 L492.0 775.0 L490.0 755.0 Z" fill="#d2f6e0" />
<path d="M725.2 855.2 C729.4 851.3 744.2 842.0 750.4 840.0 C756.5 838.0 760.7 839.5 762.1 843.4 C763.5 847.3 756.5 861.9 758.8 863.6 C761.0 865.3 770.3 855.2 775.6 853.5 C780.9 851.8 788.2 851.2 790.7 853.5 C793.2 855.8 794.6 862.5 790.7 867.0 C786.8 871.5 776.2 875.9 767.2 880.4 C758.2 884.9 742.6 893.8 737.0 893.8 C731.4 893.8 735.6 885.4 733.6 880.4 C731.6 875.4 726.6 867.8 725.2 863.6 C723.8 859.4 721.0 859.1 725.2 855.2 Z" fill="#d2f6e0" />
<path d="M760.5 910.6 C765.8 906.4 785.0 896.9 794.0 893.8 C803.0 890.7 813.1 890.4 814.2 892.1 C815.3 893.8 806.4 899.7 800.8 903.9 C795.2 908.1 787.0 914.8 780.6 917.3 C774.2 919.8 765.5 920.1 762.1 919.0 C758.8 917.9 755.2 914.8 760.5 910.6 Z" fill="#d2f6e0" />
<path d="M700.0 947.6 C705.6 939.2 729.1 927.4 733.6 927.4 C738.1 927.4 727.2 941.4 726.9 947.6 C726.6 953.8 736.4 959.4 731.9 964.4 C727.4 969.4 705.3 980.6 700.0 977.8 C694.7 975.0 694.4 956.0 700.0 947.6 Z" fill="#d2f6e0" />
<path d="M700.0 1010.0 C704.2 1004.3 718.0 1004.7 725.0 1008.0 C732.0 1011.3 740.3 1024.3 742.0 1030.0 C743.7 1035.7 742.0 1040.0 735.0 1042.0 C728.0 1044.0 705.8 1047.3 700.0 1042.0 C694.2 1036.7 695.8 1015.7 700.0 1010.0 Z" fill="#d2f6e0" />
<path d="M608.2 896.9 C611.9 892.9 627.9 884.5 632.3 886.0 C636.7 887.5 634.9 899.1 634.5 905.6 C634.1 912.1 632.3 924.2 630.1 925.3 C627.9 926.4 624.6 914.8 621.3 912.2 C618.0 909.7 612.6 912.5 610.4 910.0 C608.2 907.5 604.6 900.9 608.2 896.9 Z" fill="#f3f6f4" />
<path d="M654.2 925.3 C654.9 920.6 664.8 902.7 671.7 894.7 C678.6 886.7 689.2 879.8 695.7 877.2 C702.2 874.7 708.5 873.2 711.0 879.4 C713.5 885.6 715.4 909.3 711.0 914.4 C706.6 919.5 692.1 908.5 684.8 910.0 C677.5 911.5 672.4 920.6 667.3 923.1 C662.2 925.6 653.5 930.0 654.2 925.3 Z" fill="#eef5f0" />
<path d="M680.0 936.0 C683.5 928.5 705.8 922.3 711.0 930.0 C716.2 937.7 714.5 974.5 711.0 982.0 C707.5 989.5 695.2 982.7 690.0 975.0 C684.8 967.3 676.5 943.5 680.0 936.0 Z" fill="#d2f6e0" />
<path d="M689.0 1010.0 C692.7 1003.8 707.3 999.7 711.0 1005.0 C714.7 1010.3 714.7 1035.8 711.0 1042.0 C707.3 1048.2 692.7 1047.3 689.0 1042.0 C685.3 1036.7 685.3 1016.2 689.0 1010.0 Z" fill="#d2f6e0" />
<path d="M827.6 1011.0 C831.5 1005.8 847.1 1005.8 851.0 1011.0 C854.9 1016.2 854.9 1036.8 851.0 1042.0 C847.1 1047.2 831.5 1047.2 827.6 1042.0 C823.7 1036.8 823.7 1016.2 827.6 1011.0 Z" fill="#eef5f0" />
<path d="M717.0 838.0 C718.2 833.0 721.2 830.7 722.0 836.0 C722.8 841.3 723.2 865.0 722.0 870.0 C720.8 875.0 715.8 871.3 715.0 866.0 C714.2 860.7 715.8 843.0 717.0 838.0 Z" fill="#d2f6e0" />
<path d="M1100.8 850.0 C1102.3 844.7 1107.7 844.7 1110.0 848.0 C1112.3 851.3 1115.1 863.8 1114.8 870.0 C1114.5 876.2 1110.3 883.3 1108.0 885.0 C1105.7 886.7 1102.2 885.8 1101.0 880.0 C1099.8 874.2 1099.3 855.3 1100.8 850.0 Z" fill="#90daee" />
<path d="M664.0 629.0 C663.2 630.8 661.3 636.5 659.0 640.0 C656.7 643.5 653.2 647.0 650.0 650.0 C646.8 653.0 641.7 656.7 640.0 658.0" fill="none" stroke="#90daee" stroke-width="2.2" stroke-linejoin="round" stroke-linecap="round" />
<path d="M495.0 450.0 C495.3 455.0 495.7 468.3 497.0 480.0 C498.3 491.7 499.2 506.7 503.0 520.0 C506.8 533.3 513.0 546.7 520.0 560.0 C527.0 573.3 538.3 585.0 545.0 600.0 C551.7 615.0 557.5 641.7 560.0 650.0" fill="none" stroke="#8fd3ee" stroke-width="1.2" stroke-linejoin="round" stroke-linecap="round" />
<path d="M672.0 450.0 C673.3 456.7 678.2 478.3 680.0 490.0 C681.8 501.7 681.3 508.3 683.0 520.0 C684.7 531.7 688.8 553.3 690.0 560.0" fill="none" stroke="#8fd3ee" stroke-width="1.2" stroke-linejoin="round" stroke-linecap="round" />
<path d="M870.0 500.0 C870.3 506.7 870.3 525.0 872.0 540.0 C873.7 555.0 877.0 573.3 880.0 590.0 C883.0 606.7 886.7 623.3 890.0 640.0 C893.3 656.7 898.3 681.7 900.0 690.0" fill="none" stroke="#8fd3ee" stroke-width="1.2" stroke-linejoin="round" stroke-linecap="round" />
<path d="M361.0 520.0 C370.8 517.5 401.8 505.8 420.0 505.0 C438.2 504.2 450.0 512.5 470.0 515.0 C490.0 517.5 518.3 520.0 540.0 520.0 C561.7 520.0 590.0 515.8 600.0 515.0" fill="none" stroke="#d9dde6" stroke-width="1.4" stroke-linejoin="round" stroke-linecap="round" />
<path d="M430.0 500.0 C433.3 510.0 443.3 536.7 450.0 560.0 C456.7 583.3 465.0 616.7 470.0 640.0 C475.0 663.3 478.3 690.0 480.0 700.0" fill="none" stroke="#d9dde6" stroke-width="1.4" stroke-linejoin="round" stroke-linecap="round" />
<path d="M540.0 450.0 C543.3 458.3 548.3 488.3 560.0 500.0 C571.7 511.7 596.7 510.0 610.0 520.0 C623.3 530.0 631.7 546.7 640.0 560.0 C648.3 573.3 656.7 593.3 660.0 600.0" fill="none" stroke="#d9dde6" stroke-width="1.4" stroke-linejoin="round" stroke-linecap="round" />
<path d="M600.0 470.0 C606.7 478.3 623.3 508.3 640.0 520.0 C656.7 531.7 680.0 533.3 700.0 540.0 C720.0 546.7 750.0 556.7 760.0 560.0" fill="none" stroke="#d9dde6" stroke-width="1.4" stroke-linejoin="round" stroke-linecap="round" />
<path d="M380.0 550.0 C388.3 558.3 415.0 581.7 430.0 600.0 C445.0 618.3 455.0 650.0 470.0 660.0 C485.0 670.0 498.3 663.3 520.0 660.0 C541.7 656.7 586.7 643.3 600.0 640.0" fill="none" stroke="#d9dde6" stroke-width="1.4" stroke-linejoin="round" stroke-linecap="round" />
<path d="M700.0 450.0 C703.3 461.7 713.3 495.0 720.0 520.0 C726.7 545.0 733.3 573.3 740.0 600.0 C746.7 626.7 756.7 666.7 760.0 680.0" fill="none" stroke="#d9dde6" stroke-width="1.4" stroke-linejoin="round" stroke-linecap="round" />
<path d="M790.0 445.0 C791.7 457.5 795.0 494.2 800.0 520.0 C805.0 545.8 813.3 578.3 820.0 600.0 C826.7 621.7 836.7 641.7 840.0 650.0" fill="none" stroke="#d9dde6" stroke-width="1.4" stroke-linejoin="round" stroke-linecap="round" />
<path d="M850.0 500.0 C855.0 510.0 873.3 536.7 880.0 560.0 C886.7 583.3 886.7 616.7 890.0 640.0 C893.3 663.3 898.3 690.0 900.0 700.0" fill="none" stroke="#d9dde6" stroke-width="1.4" stroke-linejoin="round" stroke-linecap="round" />
<path d="M1040.0 560.0 C1043.3 570.0 1050.0 596.7 1060.0 620.0 C1070.0 643.3 1088.3 680.0 1100.0 700.0 C1111.7 720.0 1125.0 733.3 1130.0 740.0" fill="none" stroke="#d9dde6" stroke-width="1.4" stroke-linejoin="round" stroke-linecap="round" />
<path d="M960.0 700.0 C966.7 710.0 986.7 743.3 1000.0 760.0 C1013.3 776.7 1023.3 790.0 1040.0 800.0 C1056.7 810.0 1082.5 815.0 1100.0 820.0 C1117.5 825.0 1137.5 828.3 1145.0 830.0" fill="none" stroke="#d9dde6" stroke-width="1.4" stroke-linejoin="round" stroke-linecap="round" />
<path d="M900.0 860.0 C910.0 863.3 941.7 875.0 960.0 880.0 C978.3 885.0 993.3 885.0 1010.0 890.0 C1026.7 895.0 1037.5 908.3 1060.0 910.0 C1082.5 911.7 1130.8 901.7 1145.0 900.0" fill="none" stroke="#d9dde6" stroke-width="1.4" stroke-linejoin="round" stroke-linecap="round" />
<path d="M870.0 960.0 C883.3 958.3 925.0 950.8 950.0 950.0 C975.0 949.2 995.0 951.7 1020.0 955.0 C1045.0 958.3 1086.7 967.5 1100.0 970.0" fill="none" stroke="#d9dde6" stroke-width="1.4" stroke-linejoin="round" stroke-linecap="round" />
<path d="M990.0 960.0 C993.3 966.7 1003.3 986.3 1010.0 1000.0 C1016.7 1013.7 1026.7 1035.0 1030.0 1042.0" fill="none" stroke="#d9dde6" stroke-width="1.4" stroke-linejoin="round" stroke-linecap="round" />
<path d="M1100.0 740.0 C1103.3 750.0 1112.5 776.7 1120.0 800.0 C1127.5 823.3 1140.8 866.7 1145.0 880.0" fill="none" stroke="#d9dde6" stroke-width="1.4" stroke-linejoin="round" stroke-linecap="round" />
<path d="M361.0 600.0 C367.5 606.7 385.2 628.3 400.0 640.0 C414.8 651.7 441.7 665.0 450.0 670.0" fill="none" stroke="#d9dde6" stroke-width="1.4" stroke-linejoin="round" stroke-linecap="round" />
<path d="M540.0 720.0 C550.0 716.7 580.0 705.0 600.0 700.0 C620.0 695.0 643.3 690.0 660.0 690.0 C676.7 690.0 693.3 698.3 700.0 700.0" fill="none" stroke="#d9dde6" stroke-width="1.4" stroke-linejoin="round" stroke-linecap="round" />
<path d="M560.0 800.0 C565.0 798.3 580.8 790.8 590.0 790.0 C599.2 789.2 610.8 794.2 615.0 795.0" fill="none" stroke="#d9dde6" stroke-width="1.4" stroke-linejoin="round" stroke-linecap="round" />
<path d="M870.0 445.0 C873.3 450.8 885.0 467.5 890.0 480.0 C895.0 492.5 898.3 513.3 900.0 520.0" fill="none" stroke="#d9dde6" stroke-width="1.4" stroke-linejoin="round" stroke-linecap="round" />
<path d="M1000.0 445.0 C996.7 450.8 986.7 467.5 980.0 480.0 C973.3 492.5 963.3 513.3 960.0 520.0" fill="none" stroke="#d9dde6" stroke-width="1.4" stroke-linejoin="round" stroke-linecap="round" />
<path d="M1000.0 740.0 C1008.3 740.8 1033.3 745.0 1050.0 745.0 C1066.7 745.0 1084.2 740.0 1100.0 740.0 C1115.8 740.0 1137.5 744.2 1145.0 745.0" fill="none" stroke="#d9dde6" stroke-width="1.4" stroke-linejoin="round" stroke-linecap="round" />
<path d="M980.0 770.0 C988.3 769.2 1013.3 766.7 1030.0 765.0 C1046.7 763.3 1060.8 759.2 1080.0 760.0 C1099.2 760.8 1134.2 768.3 1145.0 770.0" fill="none" stroke="#d9dde6" stroke-width="1.4" stroke-linejoin="round" stroke-linecap="round" />
<path d="M1115.0 445.0 C1114.2 454.2 1109.2 480.8 1110.0 500.0 C1110.8 519.2 1118.3 550.0 1120.0 560.0" fill="none" stroke="#d9dde6" stroke-width="1.4" stroke-linejoin="round" stroke-linecap="round" />
<path d="M880.0 860.0 C886.7 858.3 903.3 852.5 920.0 850.0 C936.7 847.5 970.0 845.8 980.0 845.0" fill="none" stroke="#d9dde6" stroke-width="1.4" stroke-linejoin="round" stroke-linecap="round" />
<path d="M1050.0 860.0 C1055.0 866.7 1071.7 885.0 1080.0 900.0 C1088.3 915.0 1093.3 926.3 1100.0 950.0 C1106.7 973.7 1116.7 1026.7 1120.0 1042.0" fill="none" stroke="#d9dde6" stroke-width="1.4" stroke-linejoin="round" stroke-linecap="round" />
<path d="M950.0 1042.0 C951.7 1033.3 955.8 1005.3 960.0 990.0 C964.2 974.7 972.5 956.7 975.0 950.0" fill="none" stroke="#d9dde6" stroke-width="1.4" stroke-linejoin="round" stroke-linecap="round" />
<path d="M600.0 571.0 C605.0 573.2 620.7 579.7 630.0 584.0 C639.3 588.3 646.8 592.5 656.0 597.0 C665.2 601.5 677.2 605.5 685.0 611.0 C692.8 616.5 697.2 624.5 703.0 630.0 C708.8 635.5 713.8 639.0 720.0 644.0 C726.2 649.0 736.7 657.3 740.0 660.0" fill="none" stroke="#d2d8e2" stroke-width="4" stroke-linejoin="round" stroke-linecap="round" />
<path d="M385.0 742.0 C385.4 737.5 386.7 723.7 387.5 715.0 C388.3 706.3 387.1 697.5 390.0 690.0 C392.9 682.5 393.3 678.3 405.0 670.0 C416.7 661.7 441.7 649.2 460.0 640.0 C478.3 630.8 497.1 625.8 515.0 615.0 C532.9 604.2 549.6 588.8 567.5 575.0 C585.4 561.2 610.0 541.7 622.5 532.5 C635.0 523.3 637.1 523.9 642.5 520.0 C647.9 516.1 651.0 512.7 655.0 509.0 C659.0 505.3 661.6 499.8 666.2 498.0 C670.9 496.2 676.4 497.3 683.0 498.0 C689.6 498.7 698.4 503.5 705.6 502.0 C712.8 500.5 717.5 493.8 726.2 488.8 C735.0 483.8 748.0 476.1 758.0 472.0 C768.0 467.9 776.6 466.3 786.0 464.4 C795.4 462.5 807.2 463.1 814.4 460.6 C821.6 458.1 821.6 451.3 829.4 449.4 C837.2 447.5 851.9 449.1 861.2 449.4 C870.6 449.7 877.1 448.1 885.6 451.2 C894.1 454.4 906.1 460.5 912.0 468.0 C917.9 475.5 917.8 485.0 921.2 496.0 C924.7 507.0 928.9 522.6 932.5 533.8 C936.1 544.9 940.9 558.1 942.6 563.0" fill="none" stroke="#a6b3d1" stroke-width="3.4" stroke-linejoin="round" stroke-linecap="round" />
<path d="M942.6 563.0 C948.5 559.8 963.1 550.1 977.7 543.7 C992.4 537.3 1015.3 529.4 1030.5 524.4 C1045.7 519.4 1058.8 514.1 1069.0 513.8 C1079.2 513.5 1084.4 522.0 1092.0 522.6 C1099.6 523.2 1106.0 519.1 1114.8 517.3 C1123.6 515.5 1139.7 512.9 1144.7 512.0" fill="none" stroke="#a6b3d1" stroke-width="3.4" stroke-linejoin="round" stroke-linecap="round" />
<path d="M942.6 563.0 C948.5 565.9 968.0 575.3 977.7 580.6 C987.4 585.9 995.6 589.4 1000.6 594.7 C1005.6 600.0 1006.7 606.4 1007.6 612.3 C1008.5 618.1 1005.6 623.3 1005.9 629.8 C1006.2 636.2 1006.5 645.1 1009.4 651.0 C1012.3 656.9 1020.5 659.1 1023.4 665.0 C1026.3 670.9 1025.2 679.9 1027.0 686.4 C1028.8 692.9 1030.5 698.1 1034.0 704.0 C1037.5 709.9 1043.3 714.2 1048.0 721.5 C1052.7 728.8 1058.0 739.4 1062.1 747.9 C1066.2 756.4 1072.1 762.2 1072.7 772.5 C1073.3 782.8 1069.7 798.3 1065.6 809.4 C1061.5 820.5 1055.0 830.5 1048.0 839.3 C1041.0 848.1 1029.2 854.5 1023.4 862.1 C1017.5 869.7 1012.6 876.2 1012.9 885.0 C1013.2 893.8 1016.7 903.8 1025.0 915.0 C1033.3 926.2 1054.2 940.0 1062.5 952.5 C1070.8 965.0 1068.8 975.1 1075.0 990.0 C1081.2 1004.9 1095.8 1033.3 1100.0 1042.0" fill="none" stroke="#a6b3d1" stroke-width="3.4" stroke-linejoin="round" stroke-linecap="round" />
<path d="M1005.9 621.0 C1010.6 622.5 1024.0 630.1 1034.0 629.8 C1044.0 629.5 1055.0 624.6 1065.6 619.3 C1076.1 614.0 1086.2 608.8 1097.3 598.2 C1108.4 587.7 1124.5 563.3 1132.4 556.0 C1140.3 548.7 1142.7 554.6 1144.7 554.3" fill="none" stroke="#a6b3d1" stroke-width="3.4" stroke-linejoin="round" stroke-linecap="round" />
<path d="M942.6 563.0 C940.0 566.8 930.9 577.8 927.0 586.0 C923.1 594.2 921.6 599.3 919.4 612.5 C917.2 625.7 914.9 650.4 913.8 665.0 C912.6 679.6 912.7 687.5 912.5 700.0 C912.3 712.5 913.2 730.0 912.5 740.0 C911.8 750.0 908.8 756.7 908.0 760.0" fill="none" stroke="#a6b3d1" stroke-width="3.4" stroke-linejoin="round" stroke-linecap="round" />
<path d="M658.0 668.0 C665.0 661.7 689.7 639.5 700.0 630.0 C710.3 620.5 710.0 620.5 720.0 611.0 C730.0 601.5 745.8 578.1 760.0 573.0 C774.2 567.9 791.2 577.4 805.0 580.6 C818.8 583.8 830.0 586.7 842.5 592.0 C855.0 597.3 869.1 605.0 880.0 612.5 C890.9 620.0 901.8 629.8 908.0 637.0 C914.2 644.2 915.9 652.5 917.5 655.6" fill="none" stroke="#a6b3d1" stroke-width="3.4" stroke-linejoin="round" stroke-linecap="round" />
<path d="M889.0 612.5 C893.8 610.3 909.6 606.3 917.5 599.4 C925.4 592.5 933.1 575.9 936.2 571.2" fill="none" stroke="#a6b3d1" stroke-width="3.4" stroke-linejoin="round" stroke-linecap="round" />
<path d="M925.0 652.7 C932.3 653.6 955.5 661.8 969.0 658.0 C982.5 654.2 999.8 634.5 1005.9 629.8" fill="none" stroke="#a6b3d1" stroke-width="3.4" stroke-linejoin="round" stroke-linecap="round" />
<path d="M1016.4 665.3 C1024.6 665.3 1051.5 665.9 1065.6 665.3 C1079.7 664.7 1087.6 662.4 1100.8 661.8 C1114.0 661.2 1137.4 661.8 1144.7 661.8" fill="none" stroke="#a6b3d1" stroke-width="3.4" stroke-linejoin="round" stroke-linecap="round" />
<path d="M1039.3 704.0 C1045.8 700.5 1067.9 688.9 1078.0 682.9 C1088.1 676.9 1096.3 670.5 1100.0 668.0" fill="none" stroke="#a6b3d1" stroke-width="3.4" stroke-linejoin="round" stroke-linecap="round" />
<path d="M1039.3 705.7 C1033.7 710.4 1016.2 726.2 1005.9 733.8 C995.6 741.4 983.0 745.5 977.7 751.4 C972.4 757.3 975.7 764.0 974.2 769.0 C972.8 774.0 972.8 777.8 969.0 781.3 C965.2 784.8 954.3 788.5 951.4 790.0" fill="none" stroke="#a6b3d1" stroke-width="3.4" stroke-linejoin="round" stroke-linecap="round" />
<path d="M555.0 677.5 C564.2 679.2 592.5 689.6 610.0 687.5 C627.5 685.4 651.7 668.8 660.0 665.0" fill="none" stroke="#a6b3d1" stroke-width="3.4" stroke-linejoin="round" stroke-linecap="round" />
<path d="M361.0 764.0 C369.3 759.0 398.7 741.3 411.0 734.0 C423.3 726.7 420.6 726.1 435.0 720.0 C449.4 713.9 477.5 704.2 497.5 697.5 C517.5 690.8 541.7 682.9 555.0 680.0 C568.3 677.1 570.4 678.3 577.5 680.0 C584.6 681.7 587.9 685.0 597.5 690.0 C607.1 695.0 624.6 701.7 635.0 710.0 C645.4 718.3 652.0 732.4 660.0 740.0 C668.0 747.6 674.5 753.3 683.0 755.6 C691.5 757.9 702.5 755.6 711.0 753.8 C719.5 751.9 726.8 748.8 733.8 744.4 C740.7 740.0 746.9 733.4 752.5 727.5 C758.1 721.6 763.4 712.8 767.5 708.8 C771.6 704.7 773.2 702.1 777.0 703.0 C780.8 703.9 785.3 712.4 790.0 714.4 C794.7 716.4 800.0 714.4 805.0 715.3 C810.0 716.2 815.7 717.3 820.0 720.0 C824.3 722.7 828.2 727.2 831.0 731.2 C833.8 735.3 835.1 741.6 837.0 744.4 C838.9 747.2 841.6 747.4 842.5 748.0" fill="none" stroke="#a6b3d1" stroke-width="3.4" stroke-linejoin="round" stroke-linecap="round" />
<path d="M767.5 753.8 C768.8 756.9 771.2 767.8 775.0 772.5 C778.8 777.2 783.1 779.7 790.0 781.9 C796.9 784.1 808.8 784.0 816.2 785.6 C823.8 787.2 829.4 787.8 835.0 791.2 C840.6 794.7 846.2 800.6 850.0 806.2 C853.8 811.9 852.5 820.0 857.5 825.0 C862.5 830.0 868.4 836.6 880.0 836.2 C891.6 835.9 914.5 827.4 927.0 823.0 C939.5 818.6 950.3 812.2 955.0 810.0" fill="none" stroke="#a6b3d1" stroke-width="3.4" stroke-linejoin="round" stroke-linecap="round" />
<path d="M839.4 830.0 C839.8 835.0 839.4 850.8 842.0 860.0 C844.6 869.2 849.5 875.8 855.0 885.0 C860.5 894.2 868.3 904.2 875.0 915.0 C881.7 925.8 889.2 937.5 895.0 950.0 C900.8 962.5 904.5 974.7 910.0 990.0 C915.5 1005.3 925.0 1033.3 928.0 1042.0" fill="none" stroke="#a6b3d1" stroke-width="3.4" stroke-linejoin="round" stroke-linecap="round" />
<path d="M857.0 830.0 C860.0 830.4 863.7 834.2 875.0 832.5 C886.3 830.8 908.3 821.2 925.0 820.0 C941.7 818.8 963.3 823.8 975.0 825.0 C986.7 826.2 989.6 825.2 995.3 827.0 C1001.0 828.8 1006.2 831.4 1009.4 835.8 C1012.6 840.2 1014.0 845.2 1014.6 853.4 C1015.2 861.6 1013.2 879.7 1012.9 885.0" fill="none" stroke="#a6b3d1" stroke-width="3.4" stroke-linejoin="round" stroke-linecap="round" />
<path d="M842.5 748.0 C845.6 742.7 856.3 723.8 861.0 716.0 C865.7 708.2 867.4 704.7 870.6 701.0 C873.8 697.3 873.8 700.6 880.0 693.8 C886.2 686.9 903.3 665.6 908.0 660.0" fill="none" stroke="#a6b3d1" stroke-width="3.4" stroke-linejoin="round" stroke-linecap="round" />
<path d="M908.0 660.0 C909.0 666.2 911.5 681.9 913.8 697.5 C916.0 713.1 919.0 739.7 921.2 753.8 C923.5 767.8 923.5 774.2 927.0 782.0 C930.5 789.8 940.5 792.8 942.0 800.6 C943.5 808.4 937.0 824.1 936.0 828.8" fill="none" stroke="#a6b3d1" stroke-width="3.4" stroke-linejoin="round" stroke-linecap="round" />
<path d="M750.0 705.0 C754.2 704.6 764.6 700.8 775.0 702.5 C785.4 704.2 802.9 708.8 812.5 715.0 C822.1 721.2 829.2 735.8 832.5 740.0" fill="none" stroke="#a6b3d1" stroke-width="3.4" stroke-linejoin="round" stroke-linecap="round" />
<path d="M862.5 715.0 C864.6 712.5 870.4 706.2 875.0 700.0 C879.6 693.8 884.2 684.6 890.0 677.5 C895.8 670.4 906.7 660.8 910.0 657.5" fill="none" stroke="#a6b3d1" stroke-width="3.4" stroke-linejoin="round" stroke-linecap="round" />
<path d="M947.9 791.8 C945.5 795.6 937.6 810.0 933.8 814.7 C930.0 819.4 926.5 819.1 925.0 820.0" fill="none" stroke="#a6b3d1" stroke-width="3.4" stroke-linejoin="round" stroke-linecap="round" />
<path d="M398.5 445 L411.6 482.5 L408 520 L398.5 557.5 L385 600 L379.75 632.5 L376 665 L380 700" fill="none" stroke="#8fa6c0" stroke-width="1" stroke-dasharray="1.5 1.5"/>
<path d="M456 765 L470.4 840 L492.3 940.6 L527.3 960.3 M601.6 1001.9 L711 995.3 L750 993 L758 1042" fill="none" stroke="#8f8f9c" stroke-width="1" stroke-dasharray="2 2"/>
<path d="M398.0 1042.0 C470.0 985.0 550.0 925.0 610.0 885.0 S700.0 835.0 765.0 800.0" fill="none" stroke="#6fc4e2" stroke-width="0.9" stroke-dasharray="3 2.5"/>
<path d="M399.6 1044.1 C471.6 987.1 551.6 927.1 611.6 887.1 S701.6 837.1 766.6 802.1" fill="none" stroke="#6fc4e2" stroke-width="0.9" stroke-dasharray="3 2.5"/>
<path d="M401.2 1046.1 C473.2 989.1 553.2 929.1 613.2 889.1 S703.2 839.1 768.2 804.1" fill="none" stroke="#6fc4e2" stroke-width="0.9" stroke-dasharray="3 2.5"/>
<path d="M402.8 1048.2 C474.8 991.2 554.8 931.2 614.8 891.2 S704.8 841.2 769.8 806.2" fill="none" stroke="#6fc4e2" stroke-width="0.9" stroke-dasharray="3 2.5"/>
<path d="M405 875 L492 883.75 L558 886 L590.7 881.6 L632.3 894.7 L663 899" fill="none" stroke="#74c6e2" stroke-width="1" stroke-dasharray="4 3"/>
<path d="M459.4 840 L488 1041 M488 1041 L536 936 L590.7 881.6" fill="none" stroke="#74c6e2" stroke-width="1" stroke-dasharray="4 3"/>
<path d="M700 880 L740 905 L745 1042" fill="none" stroke="#74c6e2" stroke-width="1" stroke-dasharray="4 3"/>
<rect x="484" y="510" width="27" height="13" fill="#fff" stroke="#8a8a8a" stroke-width="1.2"/>
<text x="497.5" y="520.2" font-family="Liberation Sans" font-size="10.5" font-weight="400" fill="#444" text-anchor="middle">168</text>
<rect x="711" y="597.5" width="26" height="13.5" fill="#fff" stroke="#8a8a8a" stroke-width="1.2"/>
<text x="724.0" y="608.2" font-family="Liberation Sans" font-size="10.5" font-weight="400" fill="#444" text-anchor="middle">161</text>
<rect x="619.5" y="662.5" width="26.0" height="13.5" fill="#fff" stroke="#8a8a8a" stroke-width="1.2"/>
<text x="632.5" y="673.2" font-family="Liberation Sans" font-size="10.5" font-weight="400" fill="#444" text-anchor="middle">161</text>
<rect x="447" y="679" width="25.5" height="12" fill="#fff" stroke="#8a8a8a" stroke-width="1.2"/>
<text x="459.75" y="688.2" font-family="Liberation Sans" font-size="10.5" font-weight="400" fill="#444" text-anchor="middle">160</text>
<rect x="875" y="615" width="26" height="13" fill="#fff" stroke="#8a8a8a" stroke-width="1.2"/>
<text x="888.0" y="625.2" font-family="Liberation Sans" font-size="10.5" font-weight="400" fill="#444" text-anchor="middle">161</text>
<rect x="912.5" y="612.5" width="15.0" height="13.5" fill="#fff" stroke="#8a8a8a" stroke-width="1.2"/>
<text x="920.0" y="623.2" font-family="Liberation Sans" font-size="10.5" font-weight="400" fill="#444" text-anchor="middle">4</text>
<rect x="449" y="715" width="25.5" height="12" fill="#5c9b3b" stroke="#fff" stroke-width="1"/>
<text x="461.75" y="724.4" font-family="Liberation Sans" font-size="10.5" font-weight="700" fill="#fff" text-anchor="middle">E18</text>
<rect x="377" y="721" width="25.5" height="13" fill="#5c9b3b" stroke="#fff" stroke-width="1"/>
<text x="389.75" y="731.4" font-family="Liberation Sans" font-size="10.5" font-weight="700" fill="#fff" text-anchor="middle">150</text>
<rect x="985" y="532.5" width="13" height="13.5" fill="#5c9b3b" stroke="#fff" stroke-width="1"/>
<text x="991.5" y="543.4" font-family="Liberation Sans" font-size="10.5" font-weight="700" fill="#fff" text-anchor="middle">4</text>
<rect x="976" y="583" width="27" height="12.5" fill="#5c9b3b" stroke="#fff" stroke-width="1"/>
<text x="989.5" y="592.9" font-family="Liberation Sans" font-size="10.5" font-weight="700" fill="#fff" text-anchor="middle">150</text>
<rect x="1067" y="604.5" width="27" height="12.5" fill="#5c9b3b" stroke="#fff" stroke-width="1"/>
<text x="1080.5" y="614.4" font-family="Liberation Sans" font-size="10.5" font-weight="700" fill="#fff" text-anchor="middle">163</text>
<rect x="1079" y="669.5" width="18.5" height="12.5" fill="#5c9b3b" stroke="#fff" stroke-width="1"/>
<text x="1088.25" y="679.4" font-family="Liberation Sans" font-size="10.5" font-weight="700" fill="#fff" text-anchor="middle">E6</text>
<rect x="822" y="787" width="25" height="12.5" fill="#5c9b3b" stroke="#fff" stroke-width="1"/>
<text x="834.5" y="796.9" font-family="Liberation Sans" font-size="10.5" font-weight="700" fill="#fff" text-anchor="middle">E18</text>
<rect x="1046" y="826" width="19.5" height="13" fill="#5c9b3b" stroke="#fff" stroke-width="1"/>
<text x="1055.75" y="836.4" font-family="Liberation Sans" font-size="10.5" font-weight="700" fill="#fff" text-anchor="middle">E6</text>
<rect x="898.75" y="976" width="25.0" height="12" fill="#5c9b3b" stroke="#fff" stroke-width="1"/>
<text x="911.25" y="985.4" font-family="Liberation Sans" font-size="10.5" font-weight="700" fill="#fff" text-anchor="middle">E18</text>
<text x="362" y="491" font-family="Liberation Sans" font-size="10.29" letter-spacing="2.00" fill="#3a3a3a" text-anchor="start" stroke="#f7f7f7" stroke-width="2.5" paint-order="stroke" stroke-linejoin="round">MARKA</text>
<text x="362" y="491" font-family="Liberation Sans" font-size="10.29" letter-spacing="2.00" fill="#3a3a3a" text-anchor="start" stroke="#3a3a3a" stroke-width="0.25">MARKA</text>
<text x="421" y="496.5" font-family="Liberation Sans" font-size="14.00" letter-spacing="1.28" fill="#3a3a3a" text-anchor="start" stroke="#f7f7f7" stroke-width="2.5" paint-order="stroke" stroke-linejoin="round">RØA</text>
<text x="421" y="496.5" font-family="Liberation Sans" font-size="14.00" letter-spacing="1.28" fill="#3a3a3a" text-anchor="start" stroke="#3a3a3a" stroke-width="0.45">RØA</text>
<text x="461" y="495" font-family="Liberation Sans" font-size="9.80" letter-spacing="1.16" fill="#3a3a3a" text-anchor="start" stroke="#f7f7f7" stroke-width="2.5" paint-order="stroke" stroke-linejoin="round">HOVSETER</text>
<text x="461" y="495" font-family="Liberation Sans" font-size="9.80" letter-spacing="1.16" fill="#3a3a3a" text-anchor="start" stroke="#3a3a3a" stroke-width="0.25">HOVSETER</text>
<text x="629" y="533" font-family="Liberation Sans" font-size="10.29" letter-spacing="1.42" fill="#3a3a3a" text-anchor="start" stroke="#f7f7f7" stroke-width="2.5" paint-order="stroke" stroke-linejoin="round">VINDEREN</text>
<text x="629" y="533" font-family="Liberation Sans" font-size="10.29" letter-spacing="1.42" fill="#3a3a3a" text-anchor="start" stroke="#3a3a3a" stroke-width="0.25">VINDEREN</text>
<text x="562" y="568" font-family="Liberation Sans" font-size="9.80" letter-spacing="1.25" fill="#3a3a3a" text-anchor="start" stroke="#f7f7f7" stroke-width="2.5" paint-order="stroke" stroke-linejoin="round">SMESTAD</text>
<text x="562" y="568" font-family="Liberation Sans" font-size="9.80" letter-spacing="1.25" fill="#3a3a3a" text-anchor="start" stroke="#3a3a3a" stroke-width="0.25">SMESTAD</text>
<text x="383" y="598" font-family="Liberation Sans" font-size="13.5" font-weight="400" letter-spacing="0.8" fill="#3a3a3a" text-anchor="middle" stroke="#f7f7f7" stroke-width="2.5" paint-order="stroke" stroke-linejoin="round" transform="rotate(-82 383 598)">AKERSHUS</text>
<text x="420" y="606" font-family="Liberation Sans" font-size="13.5" font-weight="400" letter-spacing="0.8" fill="#3a3a3a" text-anchor="middle" stroke="#f7f7f7" stroke-width="2.5" paint-order="stroke" stroke-linejoin="round" transform="rotate(-82 420 606)">OSLO</text>
<text x="429.5" y="654" font-family="Liberation Sans" font-size="14.00" letter-spacing="0.99" fill="#3a3a3a" text-anchor="start" stroke="#f7f7f7" stroke-width="2.5" paint-order="stroke" stroke-linejoin="round">ULLERN</text>
<text x="429.5" y="654" font-family="Liberation Sans" font-size="14.00" letter-spacing="0.99" fill="#3a3a3a" text-anchor="start" stroke="#3a3a3a" stroke-width="0.45">ULLERN</text>
<text x="537.5" y="673.5" font-family="Liberation Sans" font-size="14.00" letter-spacing="1.11" fill="#3a3a3a" text-anchor="start" stroke="#f7f7f7" stroke-width="2.5" paint-order="stroke" stroke-linejoin="round">SKØYEN</text>
<text x="537.5" y="673.5" font-family="Liberation Sans" font-size="14.00" letter-spacing="1.11" fill="#3a3a3a" text-anchor="start" stroke="#3a3a3a" stroke-width="0.45">SKØYEN</text>
<text x="657.5" y="656.5" font-family="Liberation Sans" font-size="14.00" letter-spacing="0.99" fill="#3a3a3a" text-anchor="start" stroke="#f7f7f7" stroke-width="2.5" paint-order="stroke" stroke-linejoin="round">MAJORSTUEN</text>
<text x="657.5" y="656.5" font-family="Liberation Sans" font-size="14.00" letter-spacing="0.99" fill="#3a3a3a" text-anchor="start" stroke="#3a3a3a" stroke-width="0.45">MAJORSTUEN</text>
<text x="629.5" y="715.5" font-family="Liberation Sans" font-size="14.00" letter-spacing="0.77" fill="#3a3a3a" text-anchor="start" stroke="#f7f7f7" stroke-width="2.5" paint-order="stroke" stroke-linejoin="round">FROGNER</text>
<text x="629.5" y="715.5" font-family="Liberation Sans" font-size="14.00" letter-spacing="0.77" fill="#3a3a3a" text-anchor="start" stroke="#3a3a3a" stroke-width="0.45">FROGNER</text>
<text x="802.5" y="460" font-family="Liberation Sans" font-size="10.29" letter-spacing="1.39" fill="#3a3a3a" text-anchor="start" stroke="#f7f7f7" stroke-width="2.5" paint-order="stroke" stroke-linejoin="round">TÅSEN</text>
<text x="802.5" y="460" font-family="Liberation Sans" font-size="10.29" letter-spacing="1.39" fill="#3a3a3a" text-anchor="start" stroke="#3a3a3a" stroke-width="0.25">TÅSEN</text>
<text x="847" y="483.5" font-family="Liberation Sans" font-size="10.29" letter-spacing="1.43" fill="#3a3a3a" text-anchor="start" stroke="#f7f7f7" stroke-width="2.5" paint-order="stroke" stroke-linejoin="round">NYDALEN</text>
<text x="847" y="483.5" font-family="Liberation Sans" font-size="10.29" letter-spacing="1.43" fill="#3a3a3a" text-anchor="start" stroke="#3a3a3a" stroke-width="0.25">NYDALEN</text>
<text x="1074" y="476.5" font-family="Liberation Sans" font-size="10.5" font-weight="400" letter-spacing="1" fill="#3a3a3a" text-anchor="start" stroke="#f7f7f7" stroke-width="2.5" paint-order="stroke" stroke-linejoin="round">ÅRVOLL</text>
<text x="1040" y="543" font-family="Liberation Sans" font-size="14.00" letter-spacing="1.45" fill="#3a3a3a" text-anchor="start" stroke="#f7f7f7" stroke-width="2.5" paint-order="stroke" stroke-linejoin="round">BJERKE</text>
<text x="1040" y="543" font-family="Liberation Sans" font-size="14.00" letter-spacing="1.45" fill="#3a3a3a" text-anchor="start" stroke="#3a3a3a" stroke-width="0.45">BJERKE</text>
<text x="834.5" y="568" font-family="Liberation Sans" font-size="10.5" font-weight="400" letter-spacing="1" fill="#3a3a3a" text-anchor="start" stroke="#f7f7f7" stroke-width="2.5" paint-order="stroke" stroke-linejoin="round">SAGENE</text>
<text x="967" y="616.5" font-family="Liberation Sans" font-size="10.29" letter-spacing="1.40" fill="#3a3a3a" text-anchor="start" stroke="#f7f7f7" stroke-width="2.5" paint-order="stroke" stroke-linejoin="round">LØREN</text>
<text x="967" y="616.5" font-family="Liberation Sans" font-size="10.29" letter-spacing="1.40" fill="#3a3a3a" text-anchor="start" stroke="#3a3a3a" stroke-width="0.25">LØREN</text>
<text x="852.5" y="649.5" font-family="Liberation Sans" font-size="14.00" letter-spacing="1.12" fill="#3a3a3a" text-anchor="start" stroke="#f7f7f7" stroke-width="2.5" paint-order="stroke" stroke-linejoin="round">GRÜNERLØKKA</text>
<text x="852.5" y="649.5" font-family="Liberation Sans" font-size="14.00" letter-spacing="1.12" fill="#3a3a3a" text-anchor="start" stroke="#3a3a3a" stroke-width="0.45">GRÜNERLØKKA</text>
<text x="859" y="726.5" font-family="Liberation Sans" font-size="10.29" letter-spacing="1.26" fill="#3a3a3a" text-anchor="start" stroke="#f7f7f7" stroke-width="2.5" paint-order="stroke" stroke-linejoin="round">TØYEN</text>
<text x="859" y="726.5" font-family="Liberation Sans" font-size="10.29" letter-spacing="1.26" fill="#3a3a3a" text-anchor="start" stroke="#3a3a3a" stroke-width="0.25">TØYEN</text>
<text x="935" y="730" font-family="Liberation Sans" font-size="10.29" letter-spacing="1.40" fill="#3a3a3a" text-anchor="start" stroke="#f7f7f7" stroke-width="2.5" paint-order="stroke" stroke-linejoin="round">ENSJØ</text>
<text x="935" y="730" font-family="Liberation Sans" font-size="10.29" letter-spacing="1.40" fill="#3a3a3a" text-anchor="start" stroke="#3a3a3a" stroke-width="0.25">ENSJØ</text>
<text x="395" y="748" font-family="Liberation Sans" font-size="10" font-weight="400" letter-spacing="1" fill="#3a3a3a" text-anchor="start" stroke="#f7f7f7" stroke-width="2.5" paint-order="stroke" stroke-linejoin="round">LYSAKER</text>
<text x="361" y="822.5" font-family="Liberation Sans" font-size="15" font-weight="400" letter-spacing="0" fill="#222" text-anchor="start" stroke="#f7f7f7" stroke-width="2.5" paint-order="stroke" stroke-linejoin="round">rnebu</text>
<text x="867.5" y="788.5" font-family="Liberation Sans" font-size="12.92" letter-spacing="1.16" fill="#3a3a3a" text-anchor="start" stroke="#f7f7f7" stroke-width="2.5" paint-order="stroke" stroke-linejoin="round">GAMLE OSLO</text>
<text x="867.5" y="788.5" font-family="Liberation Sans" font-size="12.92" letter-spacing="1.16" fill="#3a3a3a" text-anchor="start" stroke="#3a3a3a" stroke-width="0.45">GAMLE OSLO</text>
<text x="866" y="817.5" font-family="Liberation Sans" font-size="9.80" letter-spacing="1.46" fill="#3a3a3a" text-anchor="start" stroke="#f7f7f7" stroke-width="2.5" paint-order="stroke" stroke-linejoin="round">OLD TOWN</text>
<text x="866" y="817.5" font-family="Liberation Sans" font-size="9.80" letter-spacing="1.46" fill="#3a3a3a" text-anchor="start" stroke="#3a3a3a" stroke-width="0.25">OLD TOWN</text>
<text x="994.5" y="860" font-family="Liberation Sans" font-size="10.29" letter-spacing="1.38" fill="#3a3a3a" text-anchor="start" stroke="#f7f7f7" stroke-width="2.5" paint-order="stroke" stroke-linejoin="round">MANGLERUD</text>
<text x="994.5" y="860" font-family="Liberation Sans" font-size="10.29" letter-spacing="1.38" fill="#3a3a3a" text-anchor="start" stroke="#3a3a3a" stroke-width="0.25">MANGLERUD</text>
<text x="935.5" y="920" font-family="Liberation Sans" font-size="14.00" letter-spacing="1.23" fill="#3a3a3a" text-anchor="start" stroke="#f7f7f7" stroke-width="2.5" paint-order="stroke" stroke-linejoin="round">EKEBERG</text>
<text x="935.5" y="920" font-family="Liberation Sans" font-size="14.00" letter-spacing="1.23" fill="#3a3a3a" text-anchor="start" stroke="#3a3a3a" stroke-width="0.45">EKEBERG</text>
<text x="1107.5" y="912" font-family="Liberation Sans" font-size="9.80" letter-spacing="1.17" fill="#3a3a3a" text-anchor="start" stroke="#f7f7f7" stroke-width="2.5" paint-order="stroke" stroke-linejoin="round">ØSTEN</text>
<text x="1107.5" y="912" font-family="Liberation Sans" font-size="9.80" letter-spacing="1.17" fill="#3a3a3a" text-anchor="start" stroke="#3a3a3a" stroke-width="0.25">ØSTEN</text>
<text x="906" y="968" font-family="Liberation Sans" font-size="10.29" letter-spacing="1.30" fill="#3a3a3a" text-anchor="start" stroke="#f7f7f7" stroke-width="2.5" paint-order="stroke" stroke-linejoin="round">NORDSTRAND</text>
<text x="906" y="968" font-family="Liberation Sans" font-size="10.29" letter-spacing="1.30" fill="#3a3a3a" text-anchor="start" stroke="#3a3a3a" stroke-width="0.25">NORDSTRAND</text>
<text x="1048.75" y="973" font-family="Liberation Sans" font-size="10.29" letter-spacing="1.51" fill="#3a3a3a" text-anchor="start" stroke="#f7f7f7" stroke-width="2.5" paint-order="stroke" stroke-linejoin="round">ABILDSØ</text>
<text x="1048.75" y="973" font-family="Liberation Sans" font-size="10.29" letter-spacing="1.51" fill="#3a3a3a" text-anchor="start" stroke="#3a3a3a" stroke-width="0.25">ABILDSØ</text>
<text x="979.5" y="1021" font-family="Liberation Sans" font-size="14.00" letter-spacing="1.34" fill="#3a3a3a" text-anchor="start" stroke="#f7f7f7" stroke-width="2.5" paint-order="stroke" stroke-linejoin="round">LAMBERTSE</text>
<text x="979.5" y="1021" font-family="Liberation Sans" font-size="14.00" letter-spacing="1.34" fill="#3a3a3a" text-anchor="start" stroke="#3a3a3a" stroke-width="0.45">LAMBERTSE</text>
<text x="1135" y="951" font-family="Liberation Sans" font-size="10" font-weight="700" letter-spacing="1" fill="#3a3a3a" text-anchor="start" stroke="#f7f7f7" stroke-width="2.5" paint-order="stroke" stroke-linejoin="round">B</text>
<text x="720.5" y="754.5" font-family="Liberation Sans" font-size="31" font-weight="400" letter-spacing="0" fill="#1d1d1d" text-anchor="start" stroke="#f7f7f7" stroke-width="2.5" paint-order="stroke" stroke-linejoin="round">Oslo</text>
<text x="500" y="627" font-family="Liberation Sans" font-size="17" font-weight="400" letter-spacing="0" fill="#1e8e4e" text-anchor="start" stroke="#f7f7f7" stroke-width="2.5" paint-order="stroke" stroke-linejoin="round">Vigelandsparken</text>
<text x="361" y="695" font-family="Liberation Sans" font-size="17" font-weight="400" letter-spacing="0" fill="#1a73e8" text-anchor="start" stroke="#f7f7f7" stroke-width="2.5" paint-order="stroke" stroke-linejoin="round">Vest</text>
<text x="1031" y="721" font-family="Liberation Sans" font-size="17" font-weight="400" letter-spacing="0" fill="#1a73e8" text-anchor="start" stroke="#f7f7f7" stroke-width="2.5" paint-order="stroke" stroke-linejoin="round">Tveita Senter</text>
<text x="1095" y="797" font-family="Liberation Sans" font-size="17" font-weight="400" letter-spacing="0" fill="#1a73e8" text-anchor="start" stroke="#f7f7f7" stroke-width="2.5" paint-order="stroke" stroke-linejoin="round">Bryn S</text>
<text x="418.75" y="766" font-family="Liberation Sans" font-size="17" font-weight="400" letter-spacing="0" fill="#9334e6" text-anchor="start" stroke="#f7f7f7" stroke-width="2.5" paint-order="stroke" stroke-linejoin="round">Norsk Folkemuseum</text>
<text x="660" y="795" font-family="Liberation Sans" font-size="17" font-weight="400" letter-spacing="0" fill="#9334e6" text-anchor="start" stroke="#f7f7f7" stroke-width="2.5" paint-order="stroke" stroke-linejoin="round">Frammuseet</text>
<text x="850" y="767" font-family="Liberation Sans" font-size="17" font-weight="400" letter-spacing="0" fill="#9334e6" text-anchor="start" stroke="#f7f7f7" stroke-width="2.5" paint-order="stroke" stroke-linejoin="round">Operahuset Oslo</text>
<text x="998" y="1051" font-family="Liberation Sans" font-size="15" font-weight="400" letter-spacing="0" fill="#1e8e4e" text-anchor="start" stroke="#f7f7f7" stroke-width="2.5" paint-order="stroke" stroke-linejoin="round">Oslo Kirkegaard</text>
<text x="568.8" y="977.4" font-family="Liberation Sans" font-size="14" font-weight="400" letter-spacing="1.2" fill="#333" text-anchor="middle" stroke="#f7f7f7" stroke-width="2.5" paint-order="stroke" stroke-linejoin="round" transform="rotate(29 568.8 977.4)">OSLO</text>
<text x="559.4" y="995" font-family="Liberation Sans" font-size="14" font-weight="400" letter-spacing="1.2" fill="#333" text-anchor="middle" stroke="#f7f7f7" stroke-width="2.5" paint-order="stroke" stroke-linejoin="round" transform="rotate(29 559.4 995)">AKERSHUS</text>
<path d="M632 620 A13 13 0 1 1 658 620 Q657 628 645 637 Q633 628 632 620 Z" fill="#fff" opacity="0.95"/>
<circle cx="645" cy="620" r="11" fill="#12a05c"/>
<path d="M645 613 L650 620 H647 L651 624 H639 L643 620 H640 Z M644 624 H646 V627 H644 Z" fill="#fff"/>
<path d="M399.5 687.5 A13 13 0 1 1 425.5 687.5 Q424.5 695.5 412.5 704.5 Q400.5 695.5 399.5 687.5 Z" fill="#fff" opacity="0.95"/>
<circle cx="412.5" cy="687.5" r="11" fill="#1a8cf0"/>
<path d="M406.5 685.5 H418.5 L418.5 693.5 H406.5 Z" fill="#fff"/><path d="M409.5 685.5 V683.5 A3 3 0 0 1 415.5 683.5 V685.5" stroke="#fff" stroke-width="1.6" fill="none"/>
<path d="M582 758.75 A13 13 0 1 1 608 758.75 Q607 766.75 595 775.75 Q583 766.75 582 758.75 Z" fill="#fff" opacity="0.95"/>
<circle cx="595" cy="758.75" r="11" fill="#a142f4"/>
<path d="M589 757.75 L595 752.75 L601 757.75 Z M590 758.75 H600 V763.75 H590 Z" fill="#fff"/><rect x="592" y="759.75" width="6" height="3" fill="#a142f4"/>
<path d="M627 788.75 A13 13 0 1 1 653 788.75 Q652 796.75 640 805.75 Q628 796.75 627 788.75 Z" fill="#fff" opacity="0.95"/>
<circle cx="640" cy="788.75" r="11" fill="#a142f4"/>
<path d="M634 787.75 L640 782.75 L646 787.75 Z M635 788.75 H645 V793.75 H635 Z" fill="#fff"/><rect x="637" y="789.75" width="6" height="3" fill="#a142f4"/>
<path d="M818 760 A13 13 0 1 1 844 760 Q843 768 831 777 Q819 768 818 760 Z" fill="#fff" opacity="0.95"/>
<circle cx="831" cy="760" r="11" fill="#a142f4"/>
<path d="M829 754 L836 753 V763" stroke="#fff" stroke-width="1.6" fill="none"/><circle cx="827" cy="764" r="2.6" fill="#fff"/><circle cx="834" cy="763" r="2.6" fill="#fff"/>
<path d="M1063 790 A13 13 0 1 1 1089 790 Q1088 798 1076 807 Q1064 798 1063 790 Z" fill="#fff" opacity="0.95"/>
<circle cx="1076" cy="790" r="11" fill="#1a8cf0"/>
<path d="M1070 788 H1082 L1082 796 H1070 Z" fill="#fff"/><path d="M1073 788 V786 A3 3 0 0 1 1079 786 V788" stroke="#fff" stroke-width="1.6" fill="none"/>
<path d="M1137 715 A13 13 0 1 1 1163 715 Q1162 723 1150 732 Q1138 723 1137 715 Z" fill="#fff" opacity="0.95"/>
<circle cx="1150" cy="715" r="11" fill="#1a8cf0"/>
<path d="M1144 713 H1156 L1156 721 H1144 Z" fill="#fff"/><path d="M1147 713 V711 A3 3 0 0 1 1153 711 V713" stroke="#fff" stroke-width="1.6" fill="none"/>
<path d="M343 857.5 A13 13 0 1 1 369 857.5 Q368 865.5 356 874.5 Q344 865.5 343 857.5 Z" fill="#fff" opacity="0.95"/>
<circle cx="356" cy="857.5" r="11" fill="#1a8cf0"/>
<path d="M350 855.5 H362 L362 863.5 H350 Z" fill="#fff"/><path d="M353 855.5 V853.5 A3 3 0 0 1 359 853.5 V855.5" stroke="#fff" stroke-width="1.6" fill="none"/>
<path d="M1137 1045 A13 13 0 1 1 1163 1045 Q1162 1053 1150 1062 Q1138 1053 1137 1045 Z" fill="#fff" opacity="0.95"/>
<circle cx="1150" cy="1045" r="11" fill="#1e8e4e"/>
<path d="M1150 1038 L1155 1045 H1152 L1156 1049 H1144 L1148 1045 H1145 Z M1149 1049 H1151 V1052 H1149 Z" fill="#fff"/>
<circle cx="768.4" cy="609.7" r="14.6" fill="#10b981" opacity="0.2"/><circle cx="768.4" cy="609.7" r="6" fill="#10b981" stroke="#fff" stroke-width="1.6"/>
<circle cx="637.5" cy="758.75" r="14" fill="#8fc9a8" opacity="0.5"/><circle cx="637.5" cy="758.75" r="5.5" fill="#b3bf6a" stroke="#e6efd6" stroke-width="1.2"/>
</svg>
</div>
<div class="r" style="left:1075px;top:913px;width:50px;height:49px;background:#1e2638;border-radius:10px;box-shadow:0 2px 5px rgba(0,0,0,.28)"></div>
<svg class="r" style="left:1088px;top:925.5px;" width="24" height="24" viewBox="0 0 24 24"><path d="M12 2.6 V21.4 M2.6 12 H21.4" stroke="#fff" stroke-width="3.1"/></svg>
<div class="r" style="left:1075px;top:973px;width:50px;height:49px;background:#1e2638;border-radius:10px;box-shadow:0 2px 5px rgba(0,0,0,.28)"></div>
<svg class="r" style="left:1088px;top:985.5px;" width="24" height="24" viewBox="0 0 24 24"><path d="M2.6 12 H21.4" stroke="#fff" stroke-width="3.4"/></svg>
</body></html>
